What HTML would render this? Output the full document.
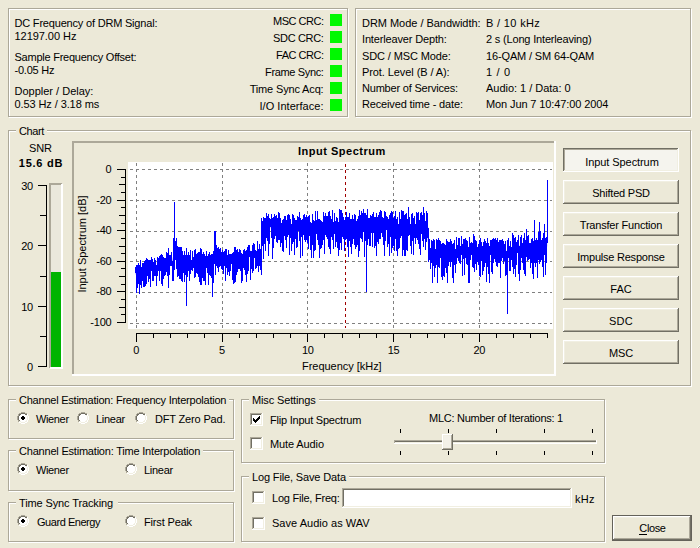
<!DOCTYPE html>
<html><head><meta charset="utf-8"><style>
html,body{margin:0;padding:0;}
body{width:700px;height:548px;background:#ECE9D8;position:relative;overflow:hidden;font-family:"Liberation Sans",sans-serif;}
.b{position:absolute;box-sizing:border-box;}
.t{position:absolute;font-size:11px;line-height:13px;white-space:nowrap;color:#000;letter-spacing:-0.2px;}
u{text-decoration:none;border-bottom:1px solid #000;line-height:11px;display:inline-block;}
</style></head><body>
<div class="b" style="left:9px;top:9px;width:340px;height:109px;border:1px solid #FFFFFF"></div>
<div class="b" style="left:8px;top:8px;width:340px;height:109px;border:1px solid #ACA899"></div>
<div class="t" style="left:14.5px;top:17px;letter-spacing:-0.192px;">DC Frequency of DRM Signal:</div>
<div class="t" style="left:14.5px;top:30px;letter-spacing:-0.050px;">12197.00 Hz</div>
<div class="t" style="left:14.5px;top:51px;letter-spacing:-0.239px;">Sample Frequency Offset:</div>
<div class="t" style="left:14.5px;top:64px;letter-spacing:-0.214px;">-0.05 Hz</div>
<div class="t" style="left:14.5px;top:85px;letter-spacing:0.000px;">Doppler / Delay:</div>
<div class="t" style="left:14.5px;top:98px;letter-spacing:-0.094px;">0.53 Hz / 3.18 ms</div>
<div class="t" style="right:376.5px;top:15px;letter-spacing:-0.500px;">MSC CRC:</div>
<div class="b" style="left:330px;top:14px;width:12px;height:12px;background:#00F800"></div>
<div class="t" style="right:376.5px;top:32px;letter-spacing:-0.343px;">SDC CRC:</div>
<div class="b" style="left:330px;top:31px;width:12px;height:12px;background:#00F800"></div>
<div class="t" style="right:376.5px;top:49px;letter-spacing:-0.486px;">FAC CRC:</div>
<div class="b" style="left:330px;top:48px;width:12px;height:12px;background:#00F800"></div>
<div class="t" style="right:376.5px;top:66px;letter-spacing:-0.360px;">Frame Sync:</div>
<div class="b" style="left:330px;top:65px;width:12px;height:12px;background:#00F800"></div>
<div class="t" style="right:376.5px;top:83px;letter-spacing:-0.154px;">Time Sync Acq:</div>
<div class="b" style="left:330px;top:82px;width:12px;height:12px;background:#00F800"></div>
<div class="t" style="right:376.5px;top:100px;letter-spacing:0.031px;">I/O Interface:</div>
<div class="b" style="left:330px;top:99px;width:12px;height:12px;background:#00F800"></div>
<div class="b" style="left:356px;top:9px;width:336px;height:109px;border:1px solid #FFFFFF"></div>
<div class="b" style="left:355px;top:8px;width:336px;height:109px;border:1px solid #ACA899"></div>
<div class="t" style="left:362px;top:17px;letter-spacing:-0.030px;">DRM Mode / Bandwidth:</div>
<div class="t" style="left:486px;top:17px;letter-spacing:0.333px;">B / 10 kHz</div>
<div class="t" style="left:362px;top:33px;letter-spacing:-0.153px;">Interleaver Depth:</div>
<div class="t" style="left:486px;top:33px;letter-spacing:-0.173px;">2 s (Long Interleaving)</div>
<div class="t" style="left:362px;top:50px;letter-spacing:-0.114px;">SDC / MSC Mode:</div>
<div class="t" style="left:486px;top:50px;letter-spacing:-0.141px;">16-QAM / SM 64-QAM</div>
<div class="t" style="left:362px;top:66px;letter-spacing:-0.084px;">Prot. Level (B / A):</div>
<div class="t" style="left:486px;top:66px;letter-spacing:0.650px;">1 / 0</div>
<div class="t" style="left:362px;top:82px;letter-spacing:-0.200px;">Number of Services:</div>
<div class="t" style="left:486px;top:82px;letter-spacing:-0.024px;">Audio: 1 / Data: 0</div>
<div class="t" style="left:362px;top:98px;letter-spacing:-0.150px;">Received time - date:</div>
<div class="t" style="left:486px;top:98px;letter-spacing:-0.109px;">Mon Jun 7 10:47:00 2004</div>
<div class="b" style="left:9px;top:131px;width:683px;height:256px;border:1px solid #FFFFFF"></div>
<div class="b" style="left:8px;top:130px;width:683px;height:256px;border:1px solid #ACA899"></div>
<div class="b" style="left:16px;top:124px;width:31px;height:12px;background:#ECE9D8"></div>
<div class="t" style="left:19px;top:125px;letter-spacing:-0.375px;">Chart</div>
<div class="t" style="left:-59.5px;width:200px;text-align:center;top:142px;letter-spacing:-0.100px;">SNR</div>
<div class="t" style="left:-59.0px;width:200px;text-align:center;top:157px;font-weight:bold;letter-spacing:0.733px;">15.6 dB</div>
<svg class="b" style="left:0;top:0" width="700" height="548" shape-rendering="crispEdges"><line x1="46.5" y1="185" x2="46.5" y2="367" stroke="#000" stroke-width="1"/><line x1="38" y1="185.5" x2="47" y2="185.5" stroke="#000"/><line x1="40" y1="215.5" x2="47" y2="215.5" stroke="#000"/><line x1="38" y1="245.5" x2="47" y2="245.5" stroke="#000"/><line x1="40" y1="276.5" x2="47" y2="276.5" stroke="#000"/><line x1="38" y1="306.5" x2="47" y2="306.5" stroke="#000"/><line x1="40" y1="336.5" x2="47" y2="336.5" stroke="#000"/><line x1="38" y1="366.5" x2="47" y2="366.5" stroke="#000"/><rect x="49" y="183" width="14" height="186" fill="#EAE8DC"/><rect x="49" y="183" width="13" height="2" fill="#ACA899"/><rect x="49" y="183" width="2" height="185" fill="#ACA899"/><rect x="61" y="184" width="2" height="185" fill="#FFFFFF"/><rect x="50" y="367" width="13" height="2" fill="#FFFFFF"/><rect x="51" y="272" width="10" height="95" fill="#00B400"/></svg>
<div class="t" style="right:667px;top:180px;">30</div>
<div class="t" style="right:667px;top:240px;">20</div>
<div class="t" style="right:667px;top:301px;">10</div>
<div class="t" style="right:667px;top:361px;">0</div>
<div class="b" style="left:72px;top:141px;width:484px;height:235px;background:#FFFFFF"></div>
<div class="b" style="left:72px;top:141px;width:482px;height:233px;background:#ACA899"></div>
<div class="b" style="left:74px;top:143px;width:480px;height:231px;background:#ECE9D8"></div>
<div class="t" style="left:298px;top:145px;font-weight:bold;letter-spacing:0.508px;">Input Spectrum</div>
<div class="b" style="left:128px;top:162px;width:425px;height:167px;background:#fff"></div>
<svg class="b" style="left:0;top:0" width="700" height="548"><g stroke="#808080" stroke-width="1" stroke-dasharray="3 3" shape-rendering="crispEdges"><line x1="130" y1="169.5" x2="552" y2="169.5"/><line x1="130" y1="200.5" x2="552" y2="200.5"/><line x1="130" y1="231.5" x2="552" y2="231.5"/><line x1="130" y1="261.5" x2="552" y2="261.5"/><line x1="130" y1="292.5" x2="552" y2="292.5"/><line x1="130" y1="323.5" x2="552" y2="323.5"/><line x1="136.5" y1="163" x2="136.5" y2="328"/><line x1="222.5" y1="163" x2="222.5" y2="328"/><line x1="307.5" y1="163" x2="307.5" y2="328"/><line x1="393.5" y1="163" x2="393.5" y2="328"/><line x1="479.5" y1="163" x2="479.5" y2="328"/></g><line x1="345.5" y1="164" x2="345.5" y2="328" stroke="#A00000" stroke-width="1" stroke-dasharray="3 3" shape-rendering="crispEdges"/><polygon fill="#0000FF" stroke="none" points="135.8,271.1 136.4,270.3 137.0,272.1 137.6,269.8 138.2,266.5 138.8,266.5 139.4,271.0 140.0,266.4 140.6,265.9 141.2,268.6 141.8,270.2 142.4,269.3 143.0,267.6 143.6,269.2 144.2,271.3 144.8,263.2 145.4,267.5 146.1,270.3 146.7,264.0 147.3,262.8 147.9,266.3 148.5,269.9 149.1,263.2 149.7,264.4 150.3,265.7 150.9,262.8 151.5,259.5 152.1,259.5 152.7,266.5 153.3,269.4 153.9,267.8 154.5,263.1 155.1,262.6 155.7,263.1 156.3,266.6 156.9,269.4 157.5,268.1 158.1,260.9 158.7,261.6 159.3,264.6 159.9,263.1 160.5,257.5 161.1,257.5 161.7,263.7 162.3,264.5 162.9,263.6 163.5,260.6 164.1,261.2 164.7,264.1 165.4,266.6 166.0,260.2 166.6,259.5 167.2,259.6 167.8,260.2 168.4,259.8 169.0,256.6 169.6,260.5 170.2,259.2 170.8,256.5 171.4,255.7 172.0,256.4 172.6,264.0 173.2,266.0 173.8,238.3 174.4,237.7 175.0,243.6 175.6,244.6 176.2,245.5 176.8,248.4 177.4,248.6 178.0,249.3 178.6,251.3 179.2,255.0 179.8,253.4 180.4,253.2 181.0,255.4 181.6,254.9 182.2,254.3 182.8,255.1 183.4,259.5 184.0,260.7 184.6,264.5 185.3,262.9 185.9,255.7 186.5,255.3 187.1,261.6 187.7,263.2 188.3,257.8 188.9,258.4 189.5,262.8 190.1,259.1 190.7,259.4 191.3,260.6 191.9,260.5 192.5,257.7 193.1,257.9 193.7,260.5 194.3,258.0 194.9,254.2 195.5,255.3 196.1,258.7 196.7,258.8 197.3,255.1 197.9,253.4 198.5,257.4 199.1,262.6 199.7,259.7 200.3,260.2 200.9,254.4 201.5,252.1 202.1,259.8 202.7,261.2 203.3,259.8 203.9,257.5 204.6,260.9 205.2,259.6 205.8,259.1 206.4,260.5 207.0,261.0 207.6,260.5 208.2,258.6 208.8,259.3 209.4,258.0 210.0,257.8 210.6,259.7 211.2,260.9 211.8,259.1 212.4,256.7 213.0,257.4 213.6,254.9 214.2,253.1 214.8,253.9 215.4,255.1 216.0,255.1 216.6,251.8 217.2,253.6 217.8,256.7 218.4,255.9 219.0,255.3 219.6,251.1 220.2,253.2 220.8,253.2 221.4,253.4 222.0,253.6 222.6,254.1 223.2,258.6 223.8,258.6 224.5,254.2 225.1,253.6 225.7,251.1 226.3,252.0 226.9,256.9 227.5,263.1 228.1,260.3 228.7,255.1 229.3,255.1 229.9,254.9 230.5,255.6 231.1,256.8 231.7,256.8 232.3,256.8 232.9,254.1 233.5,255.9 234.1,258.9 234.7,254.7 235.3,256.0 235.9,258.4 236.5,260.7 237.1,253.3 237.7,253.3 238.3,253.7 238.9,254.3 239.5,255.0 240.1,252.1 240.7,260.6 241.3,263.4 241.9,264.2 242.5,259.9 243.1,253.1 243.8,251.8 244.4,253.7 245.0,255.8 245.6,257.1 246.2,257.3 246.8,253.3 247.4,253.3 248.0,252.9 248.6,250.4 249.2,249.3 249.8,249.3 250.4,251.7 251.0,255.5 251.6,252.6 252.2,250.3 252.8,250.2 253.4,249.6 254.0,246.4 254.6,246.6 255.2,252.4 255.8,255.0 256.4,252.3 257.0,251.2 257.6,247.4 258.2,250.0 258.8,251.4 259.4,247.6 260.0,247.9 260.6,252.7 261.2,252.6 261.8,229.8 262.4,225.9 263.0,226.0 263.7,221.8 264.3,221.5 264.9,221.5 265.5,221.4 266.1,221.4 266.7,224.3 267.3,222.8 267.9,222.8 268.5,223.1 269.1,223.8 269.7,225.9 270.3,223.0 270.9,219.6 271.5,219.1 272.1,224.7 272.7,222.9 273.3,222.2 273.9,222.5 274.5,218.6 275.1,222.0 275.7,220.7 276.3,218.0 276.9,220.0 277.5,225.3 278.1,219.0 278.7,214.3 279.3,215.5 279.9,218.7 280.5,226.8 281.1,228.2 281.7,227.6 282.3,224.1 283.0,225.7 283.6,225.9 284.2,226.0 284.8,226.5 285.4,222.6 286.0,224.3 286.6,226.0 287.2,223.9 287.8,223.0 288.4,223.0 289.0,224.0 289.6,225.5 290.2,221.7 290.8,222.6 291.4,226.6 292.0,228.1 292.6,224.4 293.2,220.5 293.8,224.8 294.4,224.8 295.0,224.6 295.6,223.4 296.2,223.1 296.8,226.6 297.4,227.6 298.0,223.1 298.6,221.7 299.2,220.1 299.8,225.9 300.4,227.0 301.0,222.5 301.6,221.5 302.2,222.6 302.9,225.0 303.5,224.0 304.1,221.1 304.7,220.7 305.3,220.2 305.9,222.5 306.5,220.6 307.1,220.1 307.7,225.8 308.3,227.2 308.9,225.9 309.5,219.2 310.1,225.1 310.7,231.6 311.3,226.5 311.9,225.7 312.5,223.0 313.1,220.6 313.7,221.9 314.3,226.3 314.9,228.8 315.5,224.0 316.1,220.2 316.7,221.2 317.3,221.0 317.9,218.5 318.5,225.7 319.1,221.8 319.7,222.3 320.3,226.3 320.9,222.7 321.5,224.5 322.2,228.9 322.8,227.0 323.4,223.1 324.0,220.9 324.6,220.9 325.2,217.8 325.8,217.6 326.4,225.7 327.0,225.9 327.6,220.8 328.2,217.7 328.8,218.3 329.4,218.2 330.0,218.2 330.6,221.2 331.2,222.2 331.8,222.7 332.4,219.9 333.0,222.7 333.6,226.0 334.2,225.8 334.8,225.6 335.4,224.9 336.0,223.7 336.6,221.2 337.2,222.3 337.8,223.7 338.4,223.6 339.0,232.4 339.6,220.3 340.2,213.9 340.8,222.7 341.4,220.8 342.1,220.9 342.7,224.4 343.3,224.0 343.9,224.3 344.5,225.2 345.1,220.4 345.7,223.1 346.3,227.6 346.9,225.4 347.5,221.7 348.1,220.2 348.7,219.2 349.3,220.0 349.9,221.1 350.5,223.3 351.1,221.9 351.7,222.6 352.3,226.5 352.9,226.1 353.5,226.3 354.1,220.5 354.7,220.2 355.3,218.8 355.9,221.3 356.5,225.3 357.1,222.8 357.7,222.1 358.3,223.6 358.9,217.9 359.5,227.5 360.1,227.0 360.7,222.5 361.4,221.5 362.0,219.7 362.6,226.4 363.2,224.8 363.8,215.3 364.4,219.4 365.0,219.3 365.6,220.5 366.2,220.9 366.8,216.4 367.4,213.1 368.0,219.6 368.6,222.2 369.2,223.0 369.8,229.1 370.4,222.7 371.0,220.7 371.6,217.7 372.2,216.9 372.8,219.7 373.4,219.7 374.0,219.0 374.6,225.2 375.2,229.7 375.8,220.7 376.4,220.8 377.0,228.2 377.6,221.9 378.2,217.1 378.8,218.6 379.4,218.1 380.0,218.1 380.6,217.1 381.3,217.2 381.9,217.0 382.5,218.5 383.1,223.5 383.7,221.3 384.3,218.5 384.9,221.2 385.5,216.3 386.1,216.6 386.7,220.0 387.3,221.1 387.9,225.7 388.5,225.7 389.1,222.5 389.7,222.5 390.3,216.8 390.9,215.9 391.5,216.5 392.1,217.2 392.7,220.2 393.3,222.5 393.9,227.1 394.5,223.4 395.1,216.7 395.7,217.7 396.3,220.4 396.9,220.7 397.5,221.8 398.1,225.5 398.7,231.0 399.3,219.9 399.9,218.3 400.6,222.3 401.2,219.7 401.8,213.1 402.4,214.1 403.0,218.3 403.6,220.8 404.2,221.0 404.8,222.4 405.4,219.4 406.0,219.1 406.6,219.7 407.2,223.4 407.8,223.6 408.4,220.0 409.0,221.2 409.6,223.9 410.2,225.1 410.8,228.8 411.4,222.8 412.0,221.4 412.6,217.0 413.2,218.9 413.8,222.3 414.4,219.8 415.0,224.9 415.6,227.7 416.2,221.8 416.8,219.5 417.4,217.8 418.0,221.7 418.6,220.2 419.2,220.4 419.8,223.7 420.5,222.6 421.1,214.7 421.7,214.3 422.3,219.0 422.9,220.9 423.5,220.1 424.1,217.0 424.7,223.4 425.3,228.7 425.9,227.1 426.5,218.1 427.1,217.5 427.7,223.2 428.3,229.7 428.9,248.5 429.5,245.9 430.1,249.2 430.7,252.5 431.3,252.5 431.9,245.8 432.5,252.7 433.1,248.4 433.7,243.8 434.3,243.3 434.9,250.0 435.5,254.7 436.1,252.5 436.7,241.0 437.3,242.7 437.9,252.4 438.5,249.2 439.1,246.6 439.8,249.9 440.4,246.7 441.0,245.6 441.6,248.4 442.2,248.4 442.8,246.0 443.4,245.7 444.0,246.2 444.6,247.0 445.2,248.6 445.8,252.9 446.4,252.9 447.0,245.8 447.6,247.2 448.2,247.6 448.8,245.6 449.4,247.0 450.0,243.8 450.6,243.5 451.2,246.8 451.8,248.2 452.4,251.2 453.0,249.8 453.6,249.8 454.2,245.7 454.8,249.8 455.4,253.8 456.0,252.7 456.6,244.5 457.2,245.4 457.8,248.1 458.4,248.3 459.0,248.3 459.7,248.3 460.3,247.4 460.9,249.8 461.5,246.5 462.1,244.9 462.7,245.0 463.3,241.2 463.9,244.7 464.5,250.7 465.1,240.5 465.7,246.7 466.3,245.1 466.9,244.7 467.5,247.5 468.1,248.0 468.7,254.9 469.3,252.5 469.9,248.8 470.5,249.9 471.1,250.4 471.7,247.8 472.3,247.3 472.9,245.7 473.5,242.6 474.1,243.1 474.7,243.1 475.3,242.7 475.9,243.1 476.5,247.6 477.1,251.9 477.7,252.1 478.3,250.3 479.0,247.6 479.6,250.4 480.2,250.7 480.8,251.6 481.4,253.5 482.0,250.5 482.6,247.8 483.2,246.3 483.8,245.7 484.4,245.8 485.0,244.6 485.6,248.5 486.2,248.1 486.8,245.5 487.4,244.5 488.0,247.4 488.6,249.6 489.2,249.3 489.8,247.7 490.4,247.2 491.0,248.7 491.6,249.0 492.2,246.3 492.8,248.1 493.4,246.0 494.0,244.3 494.6,245.0 495.2,242.9 495.8,246.0 496.4,248.8 497.0,249.0 497.6,244.5 498.2,248.6 498.9,243.2 499.5,243.1 500.1,248.1 500.7,248.0 501.3,245.5 501.9,246.2 502.5,245.8 503.1,243.7 503.7,245.0 504.3,247.6 504.9,247.4 505.5,248.7 506.1,252.5 506.7,254.0 507.3,244.8 507.9,242.6 508.5,242.3 509.1,246.4 509.7,248.1 510.3,247.6 510.9,249.9 511.5,249.6 512.1,246.7 512.7,245.2 513.3,250.8 513.9,244.7 514.5,247.4 515.1,249.5 515.7,248.3 516.3,247.4 516.9,244.8 517.5,244.1 518.2,244.1 518.8,243.8 519.4,246.5 520.0,246.0 520.6,245.3 521.2,243.3 521.8,241.6 522.4,244.2 523.0,244.9 523.6,241.8 524.2,240.9 524.8,243.7 525.4,243.7 526.0,245.4 526.6,244.6 527.2,241.6 527.8,241.4 528.4,240.3 529.0,242.8 529.6,245.6 530.2,249.6 530.8,249.8 531.4,246.7 532.0,244.9 532.6,243.0 533.2,245.3 533.8,247.5 534.4,240.6 535.0,242.7 535.6,242.7 536.2,240.7 536.8,244.8 537.4,243.3 538.1,243.1 538.7,239.4 539.3,240.5 539.9,252.6 540.5,241.1 541.1,241.1 541.7,243.8 542.3,243.5 542.9,244.4 543.5,244.2 544.1,244.5 544.7,243.6 545.3,248.5 545.9,247.0 546.5,244.0 547.1,238.0 547.1,246.3 546.5,249.7 545.9,254.3 545.3,254.3 544.7,248.7 544.1,249.1 543.5,248.4 542.9,249.1 542.3,249.5 541.7,246.4 541.1,246.2 540.5,256.5 539.9,257.5 539.3,253.7 538.7,251.8 538.1,252.6 537.4,250.2 536.8,250.2 536.2,249.8 535.6,253.6 535.0,254.1 534.4,260.8 533.8,259.1 533.2,255.2 532.6,252.0 532.0,253.6 531.4,259.7 530.8,261.6 530.2,258.0 529.6,251.9 529.0,250.9 528.4,248.1 527.8,248.1 527.2,249.0 526.6,251.5 526.0,254.1 525.4,250.5 524.8,259.7 524.2,259.5 523.6,248.9 523.0,252.3 522.4,252.4 521.8,251.8 521.2,251.6 520.6,251.8 520.0,253.3 519.4,254.4 518.8,253.2 518.2,248.1 517.5,247.0 516.9,251.7 516.3,258.9 515.7,259.4 515.1,264.4 514.5,255.9 513.9,255.7 513.3,260.4 512.7,261.0 512.1,253.6 511.5,255.3 510.9,253.9 510.3,254.4 509.7,259.6 509.1,254.0 508.5,253.9 507.9,247.4 507.3,257.6 506.7,267.8 506.1,265.2 505.5,255.1 504.9,251.8 504.3,252.0 503.7,251.4 503.1,246.7 502.5,254.4 501.9,254.9 501.3,254.5 500.7,254.1 500.1,254.3 499.5,252.4 498.9,256.7 498.2,255.1 497.6,256.6 497.0,261.3 496.4,262.3 495.8,256.0 495.2,257.6 494.6,256.4 494.0,252.7 493.4,254.0 492.8,262.2 492.2,262.3 491.6,262.2 491.0,254.4 490.4,253.9 489.8,253.0 489.2,252.5 488.6,257.5 488.0,261.3 487.4,261.3 486.8,256.6 486.2,258.3 485.6,256.5 485.0,255.4 484.4,255.5 483.8,260.3 483.2,260.3 482.6,256.1 482.0,255.7 481.4,260.3 480.8,261.1 480.2,255.8 479.6,261.2 479.0,258.0 478.3,258.9 477.7,256.7 477.1,255.8 476.5,254.2 475.9,250.5 475.3,252.2 474.7,253.2 474.1,250.4 473.5,255.5 472.9,259.2 472.3,254.6 471.7,254.0 471.1,254.1 470.5,256.4 469.9,257.0 469.3,268.5 468.7,272.3 468.1,261.6 467.5,255.9 466.9,251.9 466.3,254.5 465.7,255.0 465.1,253.0 464.5,254.4 463.9,253.0 463.3,245.4 462.7,258.3 462.1,255.2 461.5,252.4 460.9,253.1 460.3,254.0 459.7,250.2 459.0,252.8 458.4,253.7 457.8,253.1 457.2,247.8 456.6,250.3 456.0,262.7 455.4,265.3 454.8,254.8 454.2,261.1 453.6,254.9 453.0,254.2 452.4,259.5 451.8,254.7 451.2,252.1 450.6,251.4 450.0,251.4 449.4,253.7 448.8,253.8 448.2,253.8 447.6,253.7 447.0,258.6 446.4,260.4 445.8,261.3 445.2,257.3 444.6,260.2 444.0,260.3 443.4,254.3 442.8,257.2 442.2,263.1 441.6,255.9 441.0,255.2 440.4,251.8 439.8,260.6 439.1,260.6 438.5,260.8 437.9,264.4 437.3,252.1 436.7,252.1 436.1,264.0 435.5,264.0 434.9,259.6 434.3,250.4 433.7,246.3 433.1,261.6 432.5,261.6 431.9,256.3 431.3,257.5 430.7,256.5 430.1,254.5 429.5,253.9 428.9,259.3 428.3,256.1 427.7,233.8 427.1,225.2 426.5,225.3 425.9,232.7 425.3,233.0 424.7,231.8 424.1,228.3 423.5,227.4 422.9,231.8 422.3,226.9 421.7,225.1 421.1,222.8 420.5,230.2 419.8,235.3 419.2,223.5 418.6,227.8 418.0,228.7 417.4,224.5 416.8,223.4 416.2,228.9 415.6,235.4 415.0,233.6 414.4,225.5 413.8,231.0 413.2,229.2 412.6,224.6 412.0,225.4 411.4,238.3 410.8,238.3 410.2,231.2 409.6,226.9 409.0,229.2 408.4,229.6 407.8,228.3 407.2,227.9 406.6,232.4 406.0,229.6 405.4,229.6 404.8,236.0 404.2,230.8 403.6,232.0 403.0,235.3 402.4,228.0 401.8,222.9 401.2,225.2 400.6,234.7 399.9,228.1 399.3,236.4 398.7,240.7 398.1,237.1 397.5,232.0 396.9,229.9 396.3,226.3 395.7,220.5 395.1,222.6 394.5,233.7 393.9,240.7 393.3,231.1 392.7,228.5 392.1,235.0 391.5,227.3 390.9,225.2 390.3,229.5 389.7,229.4 389.1,231.3 388.5,231.8 387.9,232.8 387.3,229.4 386.7,223.2 386.1,220.7 385.5,225.2 384.9,232.5 384.3,222.4 383.7,224.2 383.1,229.6 382.5,226.8 381.9,223.0 381.3,225.7 380.6,227.0 380.0,228.1 379.4,227.1 378.8,226.8 378.2,226.9 377.6,238.3 377.0,238.3 376.4,236.7 375.8,235.0 375.2,240.7 374.6,235.3 374.0,223.3 373.4,221.7 372.8,222.4 372.2,225.6 371.6,225.4 371.0,225.4 370.4,238.1 369.8,241.6 369.2,238.7 368.6,227.8 368.0,226.8 367.4,223.4 366.8,224.2 366.2,224.7 365.6,224.2 365.0,238.2 364.4,231.5 363.8,226.6 363.2,230.5 362.6,230.5 362.0,225.7 361.4,230.5 360.7,230.9 360.1,232.6 359.5,232.9 358.9,230.5 358.3,235.5 357.7,233.7 357.1,229.4 356.5,231.0 355.9,231.4 355.3,228.6 354.7,224.5 354.1,228.2 353.5,230.5 352.9,229.4 352.3,228.9 351.7,228.5 351.1,227.3 350.5,237.3 349.9,237.5 349.3,228.2 348.7,228.2 348.1,237.2 347.5,235.3 346.9,231.1 346.3,232.6 345.7,227.9 345.1,225.8 344.5,232.8 343.9,228.8 343.3,226.9 342.7,228.4 342.1,227.3 341.4,226.8 340.8,227.5 340.2,228.2 339.6,242.0 339.0,242.0 338.4,229.9 337.8,227.4 337.2,227.0 336.6,231.4 336.0,232.2 335.4,232.0 334.8,232.4 334.2,232.6 333.6,232.9 333.0,232.5 332.4,226.7 331.8,227.2 331.2,225.6 330.6,229.5 330.0,231.8 329.4,223.1 328.8,225.3 328.2,225.3 327.6,232.7 327.0,233.2 326.4,230.6 325.8,226.7 325.2,223.8 324.6,228.5 324.0,228.5 323.4,234.6 322.8,233.6 322.2,236.5 321.5,233.1 320.9,227.8 320.3,235.6 319.7,231.1 319.1,228.9 318.5,233.5 317.9,232.8 317.3,229.3 316.7,225.3 316.1,224.7 315.5,232.0 314.9,241.4 314.3,240.0 313.7,230.2 313.1,229.5 312.5,241.3 311.9,241.7 311.3,237.3 310.7,238.2 310.1,233.9 309.5,228.2 308.9,237.6 308.3,238.8 307.7,233.1 307.1,228.6 306.5,228.3 305.9,234.1 305.3,226.9 304.7,226.0 304.1,226.3 303.5,230.6 302.9,234.2 302.2,230.9 301.6,223.3 301.0,227.9 300.4,232.5 299.8,230.3 299.2,228.2 298.6,229.5 298.0,230.2 297.4,231.7 296.8,231.7 296.2,226.1 295.6,234.8 295.0,235.8 294.4,234.5 293.8,234.1 293.2,227.8 292.6,234.1 292.0,236.7 291.4,232.9 290.8,225.7 290.2,229.1 289.6,235.6 289.0,231.3 288.4,231.3 287.8,231.9 287.2,233.0 286.6,234.3 286.0,231.5 285.4,230.3 284.8,231.5 284.2,229.8 283.6,237.5 283.0,239.4 282.3,233.1 281.7,233.0 281.1,236.5 280.5,237.8 279.9,232.4 279.3,220.5 278.7,221.6 278.1,228.2 277.5,232.7 276.9,232.7 276.3,231.1 275.7,227.6 275.1,227.4 274.5,228.3 273.9,229.2 273.3,230.4 272.7,232.9 272.1,234.3 271.5,224.2 270.9,224.4 270.3,227.0 269.7,231.1 269.1,231.9 268.5,232.6 267.9,227.2 267.3,228.7 266.7,233.5 266.1,232.2 265.5,235.2 264.9,229.9 264.3,229.9 263.7,232.0 263.0,229.7 262.4,234.5 261.8,250.1 261.2,258.2 260.6,263.4 260.0,254.7 259.4,254.0 258.8,258.6 258.2,265.2 257.6,260.7 257.0,256.7 256.4,258.7 255.8,260.0 255.2,257.0 254.6,252.7 254.0,251.4 253.4,259.5 252.8,257.4 252.2,256.1 251.6,262.0 251.0,266.4 250.4,264.6 249.8,251.8 249.2,257.2 248.6,256.8 248.0,258.5 247.4,260.4 246.8,264.3 246.2,264.9 245.6,262.5 245.0,265.2 244.4,264.7 243.8,256.8 243.1,258.2 242.5,268.2 241.9,271.6 241.3,269.3 240.7,263.7 240.1,260.5 239.5,258.9 238.9,258.9 238.3,259.9 237.7,258.8 237.1,261.7 236.5,265.3 235.9,268.8 235.3,266.2 234.7,265.5 234.1,267.9 233.5,260.4 232.9,260.4 232.3,262.3 231.7,262.6 231.1,262.3 230.5,261.5 229.9,265.6 229.3,264.5 228.7,260.8 228.1,268.4 227.5,268.4 226.9,263.4 226.3,258.2 225.7,257.6 225.1,258.3 224.5,262.6 223.8,265.1 223.2,270.4 222.6,261.0 222.0,258.0 221.4,258.2 220.8,259.4 220.2,258.2 219.6,257.1 219.0,263.1 218.4,264.5 217.8,261.8 217.2,260.5 216.6,256.9 216.0,261.7 215.4,259.6 214.8,258.8 214.2,261.2 213.6,265.9 213.0,265.7 212.4,265.1 211.8,266.8 211.2,263.9 210.6,263.8 210.0,263.2 209.4,263.2 208.8,264.1 208.2,264.9 207.6,266.2 207.0,263.9 206.4,263.9 205.8,262.6 205.2,263.3 204.6,269.1 203.9,267.5 203.3,265.5 202.7,266.1 202.1,267.4 201.5,262.4 200.9,261.8 200.3,264.1 199.7,268.6 199.1,270.9 198.5,270.4 197.9,257.4 197.3,260.3 196.7,265.0 196.1,263.6 195.5,261.8 194.9,259.4 194.3,262.4 193.7,263.8 193.1,262.6 192.5,262.0 191.9,265.0 191.3,265.7 190.7,266.1 190.1,262.9 189.5,267.2 188.9,266.0 188.3,263.7 187.7,271.2 187.1,276.0 186.5,266.6 185.9,260.3 185.3,267.8 184.6,268.9 184.0,269.1 183.4,269.2 182.8,263.7 182.2,259.5 181.6,258.5 181.0,260.5 180.4,260.5 179.8,260.7 179.2,260.6 178.6,254.9 178.0,258.2 177.4,259.6 176.8,251.5 176.2,248.7 175.6,248.6 175.0,253.9 174.4,244.0 173.8,260.4 173.2,272.5 172.6,274.0 172.0,265.0 171.4,260.5 170.8,260.5 170.2,264.8 169.6,265.3 169.0,264.4 168.4,268.1 167.8,267.6 167.2,263.7 166.6,264.3 166.0,269.1 165.4,270.1 164.7,271.9 164.1,269.0 163.5,268.6 162.9,268.8 162.3,268.9 161.7,268.4 161.1,264.1 160.5,263.5 159.9,274.4 159.3,274.4 158.7,267.2 158.1,268.0 157.5,274.1 156.9,275.5 156.3,275.0 155.7,268.5 155.1,267.0 154.5,268.8 153.9,275.3 153.3,275.5 152.7,273.1 152.1,269.6 151.5,262.6 150.9,268.7 150.3,269.0 149.7,266.1 149.1,273.0 148.5,275.6 147.9,271.4 147.3,266.2 146.7,270.6 146.1,281.0 145.4,273.9 144.8,270.8 144.2,276.4 143.6,275.8 143.0,272.8 142.4,277.5 141.8,277.4 141.2,276.0 140.6,269.9 140.0,273.3 139.4,274.8 138.8,273.2 138.2,270.8 137.6,275.8 137.0,279.5 136.4,275.8 135.8,274.2"/><polyline fill="none" stroke="#0000FF" stroke-width="1" shape-rendering="crispEdges" points="135.80,273.4 135.90,267.3 136.00,269.2 136.10,275.0 136.20,272.9 136.30,286.2 136.40,273.4 136.50,280.8 136.60,293.0 136.70,266.4 136.81,267.5 136.91,276.1 137.01,265.2 137.11,271.5 137.21,286.5 137.31,276.4 137.41,274.4 137.51,287.5 137.61,269.1 137.71,266.7 137.81,272.1 137.91,267.0 138.01,283.4 138.11,271.6 138.21,263.0 138.31,266.5 138.41,268.9 138.51,266.0 138.61,266.1 138.71,283.5 138.82,273.1 138.92,273.2 139.02,266.6 139.12,270.7 139.22,275.1 139.32,282.1 139.42,274.0 139.52,269.9 139.62,294.4 139.72,271.7 139.82,277.4 139.92,270.6 140.02,264.0 140.12,269.4 140.22,265.1 140.32,260.0 140.42,264.8 140.52,276.2 140.62,285.4 140.73,270.1 140.83,267.9 140.93,267.9 141.03,267.9 141.13,272.8 141.23,274.6 141.33,277.8 141.43,287.9 141.53,276.6 141.63,266.6 141.73,272.8 141.83,285.7 141.93,278.0 142.03,272.5 142.13,263.8 142.23,269.2 142.33,268.9 142.43,263.2 142.53,280.9 142.63,276.3 142.74,280.0 142.84,269.6 142.94,271.9 143.04,265.9 143.14,268.7 143.24,263.4 143.34,267.1 143.44,273.3 143.54,270.4 143.64,276.6 143.74,287.2 143.84,271.8 143.94,275.3 144.04,276.0 144.14,278.7 144.24,272.3 144.34,271.0 144.44,266.3 144.54,269.5 144.65,286.5 144.75,261.9 144.85,261.9 144.95,260.8 145.05,272.7 145.15,270.1 145.25,259.6 145.35,270.3 145.45,282.1 145.55,274.5 145.65,276.8 145.75,266.5 145.85,269.8 145.95,285.5 146.05,281.5 146.15,283.6 146.25,271.4 146.35,266.2 146.45,279.8 146.55,268.0 146.66,264.1 146.76,258.2 146.86,268.8 146.96,263.9 147.06,260.9 147.16,264.0 147.26,272.3 147.36,267.1 147.46,262.8 147.56,258.8 147.66,269.9 147.76,262.8 147.86,276.4 147.96,265.9 148.06,270.4 148.16,281.6 148.26,271.8 148.36,269.7 148.46,273.3 148.57,275.6 148.67,277.9 148.77,275.4 148.87,260.2 148.97,261.2 149.07,272.1 149.17,266.0 149.27,259.6 149.37,265.9 149.47,264.2 149.57,262.8 149.67,265.5 149.77,278.9 149.87,262.3 149.97,269.1 150.07,264.8 150.17,266.2 150.27,268.7 150.37,286.7 150.47,266.1 150.58,268.3 150.68,262.6 150.78,275.1 150.88,268.6 150.98,259.9 151.08,259.6 151.18,263.5 151.28,271.1 151.38,259.2 151.48,259.5 151.58,257.3 151.68,259.7 151.78,260.6 151.88,258.9 151.98,268.4 152.08,270.1 152.18,273.6 152.28,278.8 152.38,263.5 152.49,258.9 152.59,270.2 152.69,273.6 152.79,280.6 152.89,268.4 152.99,262.8 153.09,265.7 153.19,271.8 153.29,275.8 153.39,272.7 153.49,280.7 153.59,277.6 153.69,274.9 153.79,267.0 153.89,261.7 153.99,265.6 154.09,266.1 154.19,272.3 154.29,275.5 154.39,269.7 154.50,269.8 154.60,262.5 154.70,258.4 154.80,259.3 154.90,264.6 155.00,266.9 155.10,261.0 155.20,262.9 155.30,263.5 155.40,267.0 155.50,269.0 155.60,273.0 155.70,276.3 155.80,265.1 155.90,259.8 156.00,262.4 156.10,281.1 156.20,267.1 156.30,268.3 156.41,271.9 156.51,266.4 156.61,268.4 156.71,280.7 156.81,280.0 156.91,285.5 157.01,273.9 157.11,274.1 157.21,271.6 157.31,268.1 157.41,276.0 157.51,257.6 157.61,257.2 157.71,264.5 157.81,276.0 157.91,268.1 158.01,268.1 158.11,271.2 158.21,259.8 158.31,267.8 158.42,267.5 158.52,263.3 158.62,259.0 158.72,258.0 158.82,266.3 158.92,266.3 159.02,260.8 159.12,263.9 159.22,268.3 159.32,270.8 159.42,261.4 159.52,279.9 159.62,280.6 159.72,276.0 159.82,277.6 159.92,256.4 160.02,261.8 160.12,261.5 160.22,270.4 160.33,270.9 160.43,266.3 160.53,264.3 160.63,261.2 160.73,258.4 160.83,257.0 160.93,257.1 161.03,254.1 161.13,262.5 161.23,282.5 161.33,264.0 161.43,256.8 161.53,264.2 161.63,283.5 161.73,263.6 161.83,258.9 161.93,267.1 162.03,266.5 162.13,269.0 162.23,277.9 162.34,268.8 162.44,284.7 162.54,267.5 162.64,255.4 162.74,263.6 162.84,271.0 162.94,286.3 163.04,268.3 163.14,257.3 163.24,260.3 163.34,268.7 163.44,263.5 163.54,279.2 163.64,270.3 163.74,260.7 163.84,260.5 163.94,262.3 164.04,258.0 164.14,261.5 164.25,274.2 164.35,266.2 164.45,276.1 164.55,261.3 164.65,261.2 164.75,265.9 164.85,272.6 164.95,270.2 165.05,263.4 165.15,274.8 165.25,269.8 165.35,269.5 165.45,269.6 165.55,270.2 165.65,258.3 165.75,268.4 165.85,261.4 165.95,259.7 166.05,264.8 166.15,259.1 166.26,252.3 166.36,271.6 166.46,262.8 166.56,263.0 166.66,259.4 166.76,257.2 166.86,261.4 166.96,272.3 167.06,267.1 167.16,261.2 167.26,259.9 167.36,259.4 167.46,253.3 167.56,276.2 167.66,264.0 167.76,268.0 167.86,266.5 167.96,259.4 168.06,270.8 168.17,272.2 168.27,260.8 168.37,248.5 168.47,253.9 168.57,256.8 168.67,261.8 168.77,268.2 168.87,287.9 168.97,268.0 169.07,255.1 169.17,256.4 169.27,263.8 169.37,264.6 169.47,257.1 169.57,263.9 169.67,259.1 169.77,266.3 169.87,274.9 169.97,264.3 170.07,265.5 170.18,261.1 170.28,265.0 170.38,259.5 170.48,256.2 170.58,255.1 170.68,258.5 170.78,254.9 170.88,260.6 170.98,257.1 171.08,260.5 171.18,261.5 171.28,255.5 171.38,265.8 171.48,266.1 171.58,255.2 171.68,252.3 171.78,256.2 171.88,256.7 171.98,254.7 172.09,281.3 172.19,261.1 172.29,263.5 172.39,265.4 172.49,263.9 172.59,264.3 172.69,281.0 172.79,269.4 172.89,274.2 172.99,273.6 173.09,281.1 173.19,266.7 173.29,265.6 173.39,267.4 173.49,269.9 173.59,239.7 173.69,248.3 173.79,237.7 173.89,247.2 173.99,240.3 174.10,237.3 174.20,237.6 174.30,237.2 174.40,202.1 174.50,253.9 174.60,269.6 174.70,243.9 174.80,242.2 174.90,244.0 175.00,240.4 175.10,243.4 175.20,245.0 175.30,256.9 175.40,259.9 175.50,253.7 175.60,246.1 175.70,245.3 175.80,248.8 175.90,244.4 176.01,248.2 176.11,244.5 176.21,237.8 176.31,269.3 176.41,248.6 176.51,252.0 176.61,247.7 176.71,249.4 176.81,250.3 176.91,268.8 177.01,249.4 177.11,246.2 177.21,248.2 177.31,255.5 177.41,276.9 177.51,261.3 177.61,267.2 177.71,248.1 177.81,254.4 177.91,247.3 178.02,246.7 178.12,248.2 178.22,259.8 178.32,252.0 178.42,251.7 178.52,254.0 178.62,255.2 178.72,253.0 178.82,249.4 178.92,251.0 179.02,279.3 179.12,259.8 179.22,272.3 179.32,260.7 179.42,260.3 179.52,255.0 179.62,258.3 179.72,263.9 179.82,252.8 179.93,247.4 180.03,246.7 180.13,260.8 180.23,266.6 180.33,251.8 180.43,256.4 180.53,270.2 180.63,254.5 180.73,254.3 180.83,260.4 180.93,260.5 181.03,281.2 181.13,264.6 181.23,256.1 181.33,255.2 181.43,246.9 181.53,256.5 181.63,254.1 181.73,257.8 181.83,254.8 181.94,258.8 182.04,281.9 182.14,251.6 182.24,254.7 182.34,268.1 182.44,259.8 182.54,251.1 182.64,275.1 182.74,250.6 182.84,255.5 182.94,265.1 183.04,272.7 183.14,260.3 183.24,260.3 183.34,254.9 183.44,259.2 183.54,271.9 183.64,269.3 183.74,258.0 183.85,271.8 183.95,268.8 184.05,265.4 184.15,269.2 184.25,265.0 184.35,250.8 184.45,251.8 184.55,264.3 184.65,262.8 184.75,268.2 184.85,275.9 184.95,282.2 185.05,270.5 185.15,265.1 185.25,259.3 185.35,255.0 185.45,266.8 185.55,258.1 185.65,263.2 185.75,263.6 185.86,256.3 185.96,255.5 186.06,260.3 186.16,255.1 186.26,248.4 186.36,260.3 186.46,269.3 186.56,283.6 186.66,275.1 186.76,255.2 186.86,251.4 186.96,306.1 187.06,254.6 187.16,276.4 187.26,260.2 187.36,264.8 187.46,271.0 187.56,276.4 187.66,276.2 187.77,264.1 187.87,265.2 187.97,262.8 188.07,258.5 188.17,271.3 188.27,252.3 188.37,253.7 188.47,262.0 188.57,257.6 188.67,253.9 188.77,260.4 188.87,267.4 188.97,266.3 189.07,267.6 189.17,280.6 189.27,265.4 189.37,260.4 189.47,255.2 189.57,263.0 189.67,268.8 189.78,266.7 189.88,258.1 189.98,262.7 190.08,262.2 190.18,261.7 190.28,250.6 190.38,250.5 190.48,268.3 190.58,261.3 190.68,255.7 190.78,258.6 190.88,274.0 190.98,272.5 191.08,266.0 191.18,266.1 191.28,265.0 191.38,260.5 191.48,265.0 191.58,264.2 191.69,260.6 191.79,260.6 191.89,267.3 191.99,266.6 192.09,259.4 192.19,253.8 192.29,258.3 192.39,271.4 192.49,259.8 192.59,254.0 192.69,251.3 192.79,257.4 192.89,261.5 192.99,262.3 193.09,268.1 193.19,257.2 193.29,263.8 193.39,259.0 193.49,266.4 193.59,262.7 193.70,263.0 193.80,263.8 193.90,260.0 194.00,257.4 194.10,261.8 194.20,278.0 194.30,259.2 194.40,262.7 194.50,257.4 194.60,260.2 194.70,254.3 194.80,250.5 194.90,254.2 195.00,259.5 195.10,259.0 195.20,251.3 195.30,248.9 195.40,277.3 195.50,253.4 195.61,262.6 195.71,265.4 195.81,258.0 195.91,261.4 196.01,262.0 196.11,257.0 196.21,264.0 196.31,265.4 196.41,260.3 196.51,264.1 196.61,256.7 196.71,254.2 196.81,272.6 196.91,258.8 197.01,268.7 197.11,265.8 197.21,258.8 197.31,257.6 197.41,253.6 197.51,252.6 197.62,253.3 197.72,260.9 197.82,257.1 197.92,253.6 198.02,276.9 198.12,253.4 198.22,251.8 198.32,261.9 198.42,255.4 198.52,266.9 198.62,267.8 198.72,273.2 198.82,269.3 198.92,270.9 199.02,270.8 199.12,258.1 199.22,254.8 199.32,260.7 199.42,259.6 199.53,272.7 199.63,274.2 199.73,259.9 199.83,252.3 199.93,266.9 200.03,284.5 200.13,264.3 200.23,269.4 200.33,260.8 200.43,254.3 200.53,262.2 200.63,263.5 200.73,263.0 200.83,254.5 200.93,248.1 201.03,252.0 201.13,263.1 201.23,252.3 201.33,254.6 201.43,260.9 201.54,267.6 201.64,248.6 201.74,249.3 201.84,271.7 201.94,284.5 202.04,259.6 202.14,277.8 202.24,266.9 202.34,261.0 202.44,255.3 202.54,262.7 202.64,260.2 202.74,262.0 202.84,275.7 202.94,264.2 203.04,252.4 203.14,261.8 203.24,281.1 203.34,268.0 203.45,261.5 203.55,266.1 203.65,254.9 203.75,253.9 203.85,259.1 203.95,281.1 204.05,269.9 204.15,260.4 204.25,280.6 204.35,256.5 204.45,256.8 204.55,254.4 204.65,263.0 204.75,261.9 204.85,266.5 204.95,267.2 205.05,284.5 205.15,258.6 205.25,263.4 205.35,262.7 205.46,258.0 205.56,256.1 205.66,261.9 205.76,262.4 205.86,282.0 205.96,261.7 206.06,251.0 206.16,260.4 206.26,266.3 206.36,254.8 206.46,263.2 206.56,260.7 206.66,267.4 206.76,264.1 206.86,260.4 206.96,263.4 207.06,271.8 207.16,261.7 207.26,263.2 207.37,272.6 207.47,259.9 207.57,267.7 207.67,266.8 207.77,258.6 207.87,264.6 207.97,256.1 208.07,256.7 208.17,265.0 208.27,260.9 208.37,284.5 208.47,257.2 208.57,258.7 208.67,264.4 208.77,253.6 208.87,258.5 208.97,262.1 209.07,263.5 209.17,271.5 209.27,262.6 209.38,259.2 209.48,254.7 209.58,252.4 209.68,257.7 209.78,264.9 209.88,274.6 209.98,258.0 210.08,261.5 210.18,258.6 210.28,266.3 210.38,255.3 210.48,264.0 210.58,263.9 210.68,263.1 210.78,263.5 210.88,275.5 210.98,262.8 211.08,258.9 211.18,260.2 211.29,254.3 211.39,263.8 211.49,255.2 211.59,277.7 211.69,278.2 211.79,265.6 211.89,260.0 211.99,267.3 212.09,258.8 212.19,277.1 212.29,254.8 212.39,254.7 212.49,263.2 212.59,253.7 212.69,255.9 212.79,271.6 212.89,263.9 212.99,296.8 213.09,255.1 213.19,262.4 213.30,261.1 213.40,266.5 213.50,273.5 213.60,270.9 213.70,264.7 213.80,254.9 213.90,251.4 214.00,252.3 214.10,248.2 214.20,255.8 214.30,264.1 214.40,259.1 214.50,261.5 214.60,260.6 214.70,251.8 214.80,253.1 214.90,258.0 215.00,230.6 215.10,257.8 215.21,251.0 215.31,257.2 215.41,263.8 215.51,256.6 215.61,254.4 215.71,275.4 215.81,262.3 215.91,260.3 216.01,256.9 216.11,264.0 216.21,249.9 216.31,244.7 216.41,253.5 216.51,258.6 216.61,266.4 216.71,251.7 216.81,252.4 216.91,252.0 217.01,248.3 217.11,256.8 217.22,268.1 217.32,261.6 217.42,256.5 217.52,257.8 217.62,262.9 217.72,257.3 217.82,257.6 217.92,261.9 218.02,256.4 218.12,247.1 218.22,266.7 218.32,251.8 218.42,255.7 218.52,267.8 218.62,255.2 218.72,257.3 218.82,272.0 218.92,265.6 219.02,255.1 219.13,249.0 219.23,250.0 219.33,257.3 219.43,266.9 219.53,256.8 219.63,259.0 219.73,260.3 219.83,256.0 219.93,249.5 220.03,253.8 220.13,248.1 220.23,251.1 220.33,263.3 220.43,266.0 220.53,253.7 220.63,253.0 220.73,256.5 220.83,251.4 220.93,253.9 221.03,260.2 221.14,269.4 221.24,257.4 221.34,252.2 221.44,253.4 221.54,253.4 221.64,253.1 221.74,254.4 221.84,258.6 221.94,265.7 222.04,260.0 222.14,269.4 222.24,252.7 222.34,253.9 222.44,256.8 222.54,254.7 222.64,253.7 222.74,250.3 222.84,260.6 222.94,266.3 223.05,273.2 223.15,261.2 223.25,272.1 223.35,258.6 223.45,252.2 223.55,273.3 223.65,274.4 223.75,258.7 223.85,263.1 223.95,262.5 224.05,263.6 224.15,265.8 224.25,252.8 224.35,256.9 224.45,262.6 224.55,257.9 224.65,250.7 224.75,252.2 224.85,258.5 224.95,253.0 225.06,260.1 225.16,258.0 225.26,255.2 225.36,259.0 225.46,249.6 225.56,256.8 225.66,281.2 225.76,253.7 225.86,249.4 225.96,252.4 226.06,250.5 226.16,250.4 226.26,256.2 226.36,256.6 226.46,251.8 226.56,259.9 226.66,258.8 226.76,268.1 226.86,259.5 226.97,268.0 227.07,264.9 227.17,254.8 227.27,257.4 227.37,274.7 227.47,271.4 227.57,265.4 227.67,269.4 227.77,262.4 227.87,268.2 227.97,268.5 228.07,271.7 228.17,259.4 228.27,249.7 228.37,253.1 228.47,259.3 228.57,266.1 228.67,255.0 228.77,249.9 228.87,255.3 228.98,261.3 229.08,259.3 229.18,265.1 229.28,254.6 229.38,254.0 229.48,263.1 229.58,271.3 229.68,275.0 229.78,266.6 229.88,260.5 229.98,275.6 230.08,262.7 230.18,254.7 230.28,254.2 230.38,255.4 230.48,255.5 230.58,255.8 230.68,258.9 230.78,261.1 230.89,267.8 230.99,261.6 231.09,262.6 231.19,262.9 231.29,263.5 231.39,254.4 231.49,253.8 231.59,259.8 231.69,261.2 231.79,257.7 231.89,262.6 231.99,263.1 232.09,256.3 232.19,255.2 232.29,279.9 232.39,261.5 232.49,254.7 232.59,252.8 232.69,258.5 232.79,264.4 232.90,260.3 233.00,253.9 233.10,253.7 233.20,255.7 233.30,260.5 233.40,253.9 233.50,256.3 233.60,268.5 233.70,284.3 233.80,259.4 233.90,258.6 234.00,266.5 234.10,265.4 234.20,283.3 234.30,253.9 234.40,251.0 234.50,259.5 234.60,271.5 234.70,265.5 234.81,282.1 234.91,250.0 235.01,247.4 235.11,256.5 235.21,265.3 235.31,266.5 235.41,281.9 235.51,257.8 235.61,254.9 235.71,255.8 235.81,282.2 235.91,269.8 236.01,263.7 236.11,253.6 236.21,264.1 236.31,274.8 236.41,259.8 236.51,265.3 236.61,268.9 236.71,265.3 236.82,250.2 236.92,256.6 237.02,262.9 237.12,248.7 237.22,249.1 237.32,259.0 237.42,255.0 237.52,258.3 237.62,252.6 237.72,257.4 237.82,271.7 237.92,252.4 238.02,258.1 238.12,262.6 238.22,260.6 238.32,253.3 238.42,253.5 238.52,254.8 238.62,252.2 238.73,254.1 238.83,269.3 238.93,257.9 239.03,259.3 239.13,265.9 239.23,257.1 239.33,262.7 239.43,256.9 239.53,249.3 239.63,254.4 239.73,251.7 239.83,253.2 239.93,256.2 240.03,271.3 240.13,264.0 240.23,259.9 240.33,250.2 240.43,260.7 240.53,261.7 240.63,251.5 240.74,270.0 240.84,264.2 240.94,263.1 241.04,260.5 241.14,263.0 241.24,273.1 241.34,282.8 241.44,265.4 241.54,252.9 241.64,267.6 241.74,277.9 241.84,265.6 241.94,272.8 242.04,263.7 242.14,268.8 242.24,280.8 242.34,260.4 242.44,259.6 242.54,269.9 242.65,255.1 242.75,254.4 242.85,267.0 242.95,257.7 243.05,261.5 243.15,253.8 243.25,252.9 243.35,250.3 243.45,249.9 243.55,258.4 243.65,251.3 243.75,257.5 243.85,268.0 243.95,255.1 244.05,249.6 244.15,254.6 244.25,265.5 244.35,266.2 244.45,252.1 244.55,249.2 244.66,253.4 244.76,262.8 244.86,269.8 244.96,262.8 245.06,266.9 245.16,257.1 245.26,257.8 245.36,270.6 245.46,255.2 245.56,275.4 245.66,251.2 245.76,253.5 245.86,261.7 245.96,259.2 246.06,257.1 246.16,259.7 246.26,281.5 246.36,272.3 246.46,257.8 246.57,250.1 246.67,266.3 246.77,252.4 246.87,250.1 246.97,254.5 247.07,252.8 247.17,258.7 247.27,273.5 247.37,250.2 247.47,260.8 247.57,259.3 247.67,261.8 247.77,270.5 247.87,256.2 247.97,248.8 248.07,245.5 248.17,256.7 248.27,255.8 248.37,251.7 248.47,256.3 248.58,271.1 248.68,256.8 248.78,260.9 248.88,258.1 248.98,249.1 249.08,249.8 249.18,245.1 249.28,256.6 249.38,257.4 249.48,249.7 249.58,249.2 249.68,245.1 249.78,245.5 249.88,249.9 249.98,251.6 250.08,265.4 250.18,251.1 250.28,251.9 250.38,280.4 250.49,260.0 250.59,262.6 250.69,259.0 250.79,268.7 250.89,268.0 250.99,269.0 251.09,262.8 251.19,254.0 251.29,252.5 251.39,252.6 251.49,250.7 251.59,260.3 251.69,268.9 251.79,266.6 251.89,255.8 251.99,252.7 252.09,249.8 252.19,256.2 252.29,251.5 252.39,249.6 252.50,252.5 252.60,244.8 252.70,245.9 252.80,257.4 252.90,273.1 253.00,260.4 253.10,264.0 253.20,257.4 253.30,248.8 253.40,255.4 253.50,271.4 253.60,250.8 253.70,249.1 253.80,244.4 253.90,243.5 254.00,245.1 254.10,245.8 254.20,251.5 254.30,254.6 254.41,251.4 254.51,247.7 254.61,246.1 254.71,258.4 254.81,247.8 254.91,243.9 255.01,254.5 255.11,253.2 255.21,255.4 255.31,257.6 255.41,252.1 255.51,260.5 255.61,254.8 255.71,268.9 255.81,250.1 255.91,261.7 256.01,252.7 256.11,258.8 256.21,260.6 256.31,256.1 256.42,252.1 256.52,251.4 256.62,253.5 256.72,258.5 256.82,251.1 256.92,268.2 257.02,258.0 257.12,252.2 257.22,245.1 257.32,240.9 257.42,250.6 257.52,265.2 257.62,250.1 257.72,242.4 257.82,246.2 257.92,264.6 258.02,266.4 258.12,261.8 258.22,266.8 258.33,271.7 258.43,265.5 258.53,259.8 258.63,249.4 258.73,250.0 258.83,254.6 258.93,255.7 259.03,247.8 259.13,252.4 259.23,251.3 259.33,251.7 259.43,247.3 259.53,256.6 259.63,247.5 259.73,260.0 259.83,244.4 259.93,247.1 260.03,269.2 260.13,248.8 260.23,250.6 260.34,251.5 260.44,249.2 260.54,256.0 260.64,265.5 260.74,257.5 260.84,255.7 260.94,258.5 261.04,274.9 261.14,266.2 261.24,257.6 261.34,251.0 261.44,252.3 261.54,247.9 261.64,248.0 261.74,253.1 261.84,243.9 261.94,218.4 262.04,226.2 262.14,238.3 262.25,222.0 262.35,221.0 262.45,228.6 262.55,236.5 262.65,226.7 262.75,246.0 262.85,225.7 262.95,229.7 263.05,229.8 263.15,226.6 263.25,216.7 263.35,217.1 263.45,259.1 263.55,225.3 263.65,232.9 263.75,240.2 263.85,221.2 263.95,219.8 264.05,223.1 264.15,244.0 264.26,229.1 264.36,224.0 264.46,218.5 264.56,221.3 264.66,230.3 264.76,221.9 264.86,218.7 264.96,221.0 265.06,243.0 265.16,228.4 265.26,250.8 265.36,230.3 265.46,232.1 265.56,236.5 265.66,249.9 265.76,221.2 265.86,218.4 265.96,221.8 266.06,222.8 266.17,230.9 266.27,232.3 266.37,220.2 266.47,213.0 266.57,237.7 266.67,228.0 266.77,236.5 266.87,217.8 266.97,234.0 267.07,241.2 267.17,227.7 267.27,228.9 267.37,228.3 267.47,222.7 267.57,219.5 267.67,215.6 267.77,223.2 267.87,223.9 267.97,224.6 268.07,255.2 268.18,238.1 268.28,223.2 268.38,213.8 268.48,222.3 268.58,223.0 268.68,221.2 268.78,230.6 268.88,233.5 268.98,256.1 269.08,225.6 269.18,221.6 269.28,239.6 269.38,227.0 269.48,227.9 269.58,232.5 269.68,236.3 269.78,241.0 269.88,226.7 269.98,218.1 270.09,225.6 270.19,227.0 270.29,225.1 270.39,220.4 270.49,220.3 270.59,222.2 270.69,227.2 270.79,225.0 270.89,219.2 270.99,219.0 271.09,223.0 271.19,213.7 271.29,238.2 271.39,219.2 271.49,226.6 271.59,215.8 271.69,217.0 271.79,234.4 271.89,221.4 271.99,224.6 272.10,240.0 272.20,228.6 272.30,235.7 272.40,224.8 272.50,258.8 272.60,233.9 272.70,219.4 272.80,230.5 272.90,218.2 273.00,222.0 273.10,230.2 273.20,217.5 273.30,222.4 273.40,248.1 273.50,223.6 273.60,222.8 273.70,244.1 273.80,232.2 273.90,228.4 274.01,229.6 274.11,217.7 274.21,214.1 274.31,214.5 274.41,223.2 274.51,239.3 274.61,231.2 274.71,222.7 274.81,228.1 274.91,220.7 275.01,217.3 275.11,223.7 275.21,232.8 275.31,221.7 275.41,225.8 275.51,220.3 275.61,223.7 275.71,235.5 275.81,228.3 275.91,218.0 276.02,215.3 276.12,217.1 276.22,235.2 276.32,218.1 276.42,225.8 276.52,232.3 276.62,215.9 276.72,222.7 276.82,232.9 276.92,242.1 277.02,226.8 277.12,234.6 277.22,218.9 277.32,218.9 277.42,242.5 277.52,230.0 277.62,233.9 277.72,224.7 277.82,228.6 277.93,226.7 278.03,217.3 278.13,212.3 278.23,214.2 278.33,223.0 278.43,239.5 278.53,227.2 278.63,214.0 278.73,218.3 278.83,217.8 278.93,215.7 279.03,214.5 279.13,214.0 279.23,238.2 279.33,222.0 279.43,212.9 279.53,215.4 279.63,221.0 279.73,219.4 279.83,232.3 279.94,238.3 280.04,239.8 280.14,218.1 280.24,232.5 280.34,218.4 280.44,233.3 280.54,239.5 280.64,225.9 280.74,236.7 280.84,247.4 280.94,224.4 281.04,228.9 281.14,236.1 281.24,229.4 281.34,231.6 281.44,227.5 281.54,227.9 281.64,239.5 281.74,223.3 281.85,224.8 281.95,233.6 282.05,248.5 282.15,228.1 282.25,226.3 282.35,251.1 282.45,232.0 282.55,223.8 282.65,233.8 282.75,221.3 282.85,219.8 282.95,225.6 283.05,225.9 283.15,242.7 283.25,226.3 283.35,241.8 283.45,251.7 283.55,225.8 283.65,226.2 283.75,251.0 283.86,227.6 283.96,222.0 284.06,215.6 284.16,226.2 284.26,231.4 284.36,222.8 284.46,229.4 284.56,230.0 284.66,235.9 284.76,232.4 284.86,227.1 284.96,231.6 285.06,221.9 285.16,221.4 285.26,235.7 285.36,240.1 285.46,217.6 285.56,215.6 285.66,224.2 285.77,227.4 285.87,224.7 285.97,231.1 286.07,245.6 286.17,231.6 286.27,226.4 286.37,247.7 286.47,219.9 286.57,223.1 286.67,237.6 286.77,235.4 286.87,228.4 286.97,225.8 287.07,217.6 287.17,215.2 287.27,223.1 287.37,228.4 287.47,233.9 287.57,234.7 287.67,231.0 287.78,228.7 287.88,237.1 287.98,222.9 288.08,217.9 288.18,222.3 288.28,232.3 288.38,229.1 288.48,223.3 288.58,223.5 288.68,235.4 288.78,232.3 288.88,214.0 288.98,219.2 289.08,226.1 289.18,232.4 289.28,236.9 289.38,227.3 289.48,225.2 289.58,215.0 289.69,223.3 289.79,254.9 289.89,241.7 289.99,241.1 290.09,230.4 290.19,222.3 290.29,220.9 290.39,226.2 290.49,219.5 290.59,221.4 290.69,223.2 290.79,223.7 290.89,232.0 290.99,234.8 291.09,229.4 291.19,224.7 291.29,224.3 291.39,230.3 291.49,225.4 291.59,233.1 291.70,250.6 291.80,236.5 291.90,232.4 292.00,224.3 292.10,239.5 292.20,236.8 292.30,244.3 292.40,227.2 292.50,225.0 292.60,243.7 292.70,227.9 292.80,217.3 292.90,214.2 293.00,220.5 293.10,224.7 293.20,227.5 293.30,223.1 293.40,220.5 293.50,214.8 293.61,236.5 293.71,229.9 293.81,241.7 293.91,234.9 294.01,225.0 294.11,224.8 294.21,232.3 294.31,255.4 294.41,222.7 294.51,217.7 294.61,218.6 294.71,233.5 294.81,243.3 294.91,229.0 295.01,238.6 295.11,219.7 295.21,232.5 295.31,238.5 295.41,235.8 295.51,235.8 295.62,223.1 295.72,223.3 295.82,223.8 295.92,226.7 296.02,224.6 296.12,223.2 296.22,220.4 296.32,219.9 296.42,234.6 296.52,221.6 296.62,227.0 296.72,228.5 296.82,248.4 296.92,230.8 297.02,232.0 297.12,226.5 297.22,231.1 297.32,236.0 297.42,231.0 297.53,230.2 297.63,222.8 297.73,247.1 297.83,224.2 297.93,216.4 298.03,217.6 298.13,217.4 298.23,223.8 298.33,229.3 298.43,230.6 298.53,230.2 298.63,219.6 298.73,229.6 298.83,221.3 298.93,222.6 299.03,229.2 299.13,238.4 299.23,228.7 299.33,218.6 299.43,211.6 299.54,214.3 299.64,227.0 299.74,225.7 299.84,241.4 299.94,239.0 300.04,230.9 300.14,229.0 300.24,226.4 300.34,258.2 300.44,223.1 300.54,217.9 300.64,230.9 300.74,233.3 300.84,226.0 300.94,228.4 301.04,223.6 301.14,220.8 301.24,226.8 301.34,222.3 301.45,222.0 301.55,236.5 301.65,222.6 301.75,221.1 301.85,222.7 301.95,221.2 302.05,219.4 302.15,250.4 302.25,225.4 302.35,232.4 302.45,256.3 302.55,236.8 302.65,224.8 302.75,227.2 302.85,242.3 302.95,224.8 303.05,223.7 303.15,232.6 303.25,234.9 303.35,219.6 303.46,225.3 303.56,214.7 303.66,220.9 303.76,226.2 303.86,232.5 303.96,225.1 304.06,221.4 304.16,226.4 304.26,232.1 304.36,239.6 304.46,220.5 304.56,216.1 304.66,214.4 304.76,218.1 304.86,221.2 304.96,227.1 305.06,223.9 305.16,225.2 305.26,228.5 305.37,237.2 305.47,236.5 305.57,226.7 305.67,216.8 305.77,219.8 305.87,221.6 305.97,242.2 306.07,237.1 306.17,224.8 306.27,215.3 306.37,224.5 306.47,228.1 306.57,228.4 306.67,218.7 306.77,236.7 306.87,220.1 306.97,218.0 307.07,222.4 307.17,237.4 307.27,234.7 307.38,220.1 307.48,216.7 307.58,228.6 307.68,225.5 307.78,226.5 307.88,243.1 307.98,229.2 308.08,228.1 308.18,236.2 308.28,226.9 308.38,225.5 308.48,241.3 308.58,249.1 308.68,232.3 308.78,239.9 308.88,248.6 308.98,217.2 309.08,214.7 309.18,229.4 309.29,219.5 309.39,231.1 309.49,219.5 309.59,216.3 309.69,224.9 309.79,236.4 309.89,225.5 309.99,219.1 310.09,231.7 310.19,241.6 310.29,228.0 310.39,234.9 310.49,249.7 310.59,231.6 310.69,239.6 310.79,231.6 310.89,231.8 310.99,240.5 311.09,226.3 311.19,231.4 311.30,242.9 311.40,257.9 311.50,223.8 311.60,222.6 311.70,227.0 311.80,225.6 311.90,241.6 312.00,241.8 312.10,226.1 312.20,240.5 312.30,244.7 312.40,222.8 312.50,215.0 312.60,213.6 312.70,216.2 312.80,223.4 312.90,243.9 313.00,240.2 313.10,241.4 313.21,232.1 313.31,222.2 313.41,222.5 313.51,220.1 313.61,221.5 313.71,239.8 313.81,257.9 313.91,221.8 314.01,225.8 314.11,221.9 314.21,220.7 314.31,235.8 314.41,227.6 314.51,251.2 314.61,240.1 314.71,241.9 314.81,228.4 314.91,247.1 315.01,226.9 315.11,231.4 315.22,250.3 315.32,227.7 315.42,229.7 315.52,218.3 315.62,210.8 315.72,219.1 315.82,237.3 315.92,232.3 316.02,222.7 316.12,225.0 316.22,220.7 316.32,220.0 316.42,220.5 316.52,224.1 316.62,234.4 316.72,222.5 316.82,223.7 316.92,232.2 317.02,220.3 317.13,225.5 317.23,229.0 317.33,240.3 317.43,233.1 317.53,229.4 317.63,215.7 317.73,218.2 317.83,211.2 317.93,213.9 318.03,219.2 318.13,234.0 318.23,237.2 318.33,225.5 318.43,232.2 318.53,245.2 318.63,221.6 318.73,229.7 318.83,237.1 318.93,230.2 319.03,226.3 319.14,222.2 319.24,227.0 319.34,218.8 319.44,220.4 319.54,220.6 319.64,222.7 319.74,257.8 319.84,232.1 319.94,231.0 320.04,225.5 320.14,231.1 320.24,237.1 320.34,228.3 320.44,224.5 320.54,220.5 320.64,249.1 320.74,239.5 320.84,221.3 320.94,222.3 321.05,226.5 321.15,223.7 321.25,220.8 321.35,228.2 321.45,226.7 321.55,248.1 321.65,243.0 321.75,222.7 321.85,237.5 321.95,230.4 322.05,234.3 322.15,240.7 322.25,222.5 322.35,221.9 322.45,231.7 322.55,233.6 322.65,228.3 322.75,245.2 322.85,226.4 322.95,233.6 323.06,232.0 323.16,235.1 323.26,212.5 323.36,212.5 323.46,220.7 323.56,223.0 323.66,223.6 323.76,240.4 323.86,236.9 323.96,230.2 324.06,220.7 324.16,221.4 324.26,246.9 324.36,216.0 324.46,224.7 324.56,254.1 324.66,223.8 324.76,217.2 324.86,234.9 324.97,223.8 325.07,220.3 325.17,212.9 325.27,217.8 325.37,234.4 325.47,214.5 325.57,217.9 325.67,222.0 325.77,217.4 325.87,235.3 325.97,226.2 326.07,216.5 326.17,226.9 326.27,230.5 326.37,231.8 326.47,224.3 326.57,225.7 326.67,237.2 326.77,225.6 326.87,230.7 326.98,230.2 327.08,239.0 327.18,222.8 327.28,233.9 327.38,236.0 327.48,226.4 327.58,229.1 327.68,219.9 327.78,215.8 327.88,233.7 327.98,217.6 328.08,216.8 328.18,218.0 328.28,224.7 328.38,247.2 328.48,224.9 328.58,215.1 328.68,225.4 328.78,245.8 328.89,218.7 328.99,211.9 329.09,220.1 329.19,248.5 329.29,218.1 329.39,211.1 329.49,218.5 329.59,220.8 329.69,213.5 329.79,224.1 329.89,232.1 329.99,216.2 330.09,218.0 330.19,237.2 330.29,254.2 330.39,240.5 330.49,230.9 330.59,220.8 330.69,223.0 330.79,222.7 330.90,219.6 331.00,226.3 331.10,222.3 331.20,230.5 331.30,218.6 331.40,223.9 331.50,222.2 331.60,227.3 331.70,237.3 331.80,236.3 331.90,225.0 332.00,227.1 332.10,220.8 332.20,219.5 332.30,224.1 332.40,237.6 332.50,239.7 332.60,225.7 332.70,215.8 332.81,210.1 332.91,219.4 333.01,230.1 333.11,224.7 333.21,221.9 333.31,246.5 333.41,233.4 333.51,228.2 333.61,225.8 333.71,248.8 333.81,231.6 333.91,235.4 334.01,221.6 334.11,226.5 334.21,223.7 334.31,225.8 334.41,233.1 334.51,226.0 334.61,234.1 334.71,223.9 334.82,212.8 334.92,230.7 335.02,233.6 335.12,225.6 335.22,227.9 335.32,247.1 335.42,223.3 335.52,232.6 335.62,242.8 335.72,226.3 335.82,224.6 335.92,222.3 336.02,220.9 336.12,237.4 336.22,231.5 336.32,241.9 336.42,231.1 336.52,219.7 336.62,217.4 336.73,221.2 336.83,225.8 336.93,236.5 337.03,221.2 337.13,223.7 337.23,221.6 337.33,232.0 337.43,224.1 337.53,224.2 337.63,229.9 337.73,227.5 337.83,218.1 337.93,222.4 338.03,252.9 338.13,224.9 338.23,227.1 338.33,223.5 338.43,222.5 338.53,226.9 338.63,223.7 338.74,231.2 338.84,255.8 338.94,237.2 339.04,245.9 339.14,249.6 339.24,239.6 339.34,240.5 339.44,235.2 339.54,242.7 339.64,247.5 339.74,229.2 339.84,216.4 339.94,210.2 340.04,210.3 340.14,215.5 340.24,212.7 340.34,213.2 340.44,227.6 340.54,228.5 340.65,226.5 340.75,242.7 340.85,242.2 340.95,223.0 341.05,222.5 341.15,225.2 341.25,227.3 341.35,214.3 341.45,210.4 341.55,215.7 341.65,225.6 341.75,249.8 341.85,227.4 341.95,220.1 342.05,228.8 342.15,225.0 342.25,235.4 342.35,226.8 342.45,223.0 342.55,213.0 342.66,223.0 342.76,226.5 342.86,224.1 342.96,237.0 343.06,234.1 343.16,227.4 343.26,223.0 343.36,224.9 343.46,216.7 343.56,224.0 343.66,224.0 343.76,227.1 343.86,224.9 343.96,239.4 344.06,229.5 344.16,249.5 344.26,234.2 344.36,225.1 344.46,226.4 344.57,225.8 344.67,220.3 344.77,250.9 344.87,225.3 344.97,220.5 345.07,218.8 345.17,217.3 345.27,220.3 345.37,227.0 345.47,225.8 345.57,222.3 345.67,228.3 345.77,238.6 345.87,240.1 345.97,230.6 346.07,225.0 346.17,227.0 346.27,239.2 346.37,229.4 346.47,227.4 346.58,228.0 346.68,226.1 346.78,233.4 346.88,212.2 346.98,225.1 347.08,222.7 347.18,231.9 347.28,240.1 347.38,221.0 347.48,217.5 347.58,247.1 347.68,224.8 347.78,237.6 347.88,236.7 347.98,221.2 348.08,216.7 348.18,219.8 348.28,257.1 348.38,230.4 348.49,237.5 348.59,218.9 348.69,218.3 348.79,218.3 348.89,219.8 348.99,221.4 349.09,224.4 349.19,229.8 349.29,236.1 349.39,240.5 349.49,220.5 349.59,213.4 349.69,221.0 349.79,235.2 349.89,218.5 349.99,221.3 350.09,229.8 350.19,242.6 350.29,238.2 350.39,246.5 350.50,240.0 350.60,222.6 350.70,225.0 350.80,226.4 350.90,219.2 351.00,235.4 351.10,254.3 351.20,219.5 351.30,220.1 351.40,227.7 351.50,221.6 351.60,225.1 351.70,221.5 351.80,225.5 351.90,230.2 352.00,228.8 352.10,227.1 352.20,228.9 352.30,224.6 352.41,237.3 352.51,244.2 352.61,226.3 352.71,227.3 352.81,227.8 352.91,215.2 353.01,225.9 353.11,238.7 353.21,230.1 353.31,225.8 353.41,227.2 353.51,232.8 353.61,234.0 353.71,228.3 353.81,228.0 353.91,230.6 354.01,219.2 354.11,220.4 354.21,220.8 354.31,222.3 354.42,227.9 354.52,216.7 354.62,220.2 354.72,219.8 354.82,224.2 354.92,214.5 355.02,249.2 355.12,224.6 355.22,230.4 355.32,237.5 355.42,215.4 355.52,218.0 355.62,230.9 355.72,218.4 355.82,219.8 355.92,229.6 356.02,247.1 356.12,231.6 356.22,224.8 356.33,233.1 356.43,226.7 356.53,226.8 356.63,224.0 356.73,233.1 356.83,223.4 356.93,229.8 357.03,219.9 357.13,221.8 357.23,219.5 357.33,222.5 357.43,234.3 357.53,228.4 357.63,232.5 357.73,222.0 357.83,220.3 357.93,227.3 358.03,248.5 358.13,239.3 358.23,235.0 358.34,216.4 358.44,231.4 358.54,256.9 358.64,227.8 358.74,235.7 358.84,217.4 358.94,228.0 359.04,219.2 359.14,210.3 359.24,213.7 359.34,232.1 359.44,228.6 359.54,229.2 359.64,250.7 359.74,233.2 359.84,235.6 359.94,227.2 360.04,237.7 360.14,221.5 360.25,224.6 360.35,230.4 360.45,231.1 360.55,226.9 360.65,220.2 360.75,214.8 360.85,229.4 360.95,231.9 361.05,239.1 361.15,220.7 361.25,233.2 361.35,219.1 361.45,231.0 361.55,223.3 361.65,210.8 361.75,223.8 361.85,224.1 361.95,226.5 362.05,226.3 362.15,226.6 362.26,218.7 362.36,212.9 362.46,221.2 362.56,241.8 362.66,229.7 362.76,232.1 362.86,234.1 362.96,230.9 363.06,226.6 363.16,227.6 363.26,224.0 363.36,229.8 363.46,216.1 363.56,208.6 363.66,211.8 363.76,215.0 363.86,230.9 363.96,231.6 364.06,216.7 364.17,212.9 364.27,224.2 364.37,241.8 364.47,231.2 364.57,240.7 364.67,224.3 364.77,217.3 364.87,256.7 364.97,215.1 365.07,212.9 365.17,232.7 365.27,220.6 365.37,218.7 365.47,240.5 365.57,220.5 365.67,223.5 365.77,221.8 365.87,222.2 365.97,233.4 366.07,224.5 366.18,215.8 366.28,218.0 366.38,224.8 366.48,292.2 366.58,227.3 366.68,218.0 366.78,214.6 366.88,221.3 366.98,246.1 367.08,212.3 367.18,212.4 367.28,222.9 367.38,223.7 367.48,226.4 367.58,211.1 367.68,208.6 367.78,219.4 367.88,244.6 367.98,226.9 368.09,218.3 368.19,226.5 368.29,233.7 368.39,228.2 368.49,220.2 368.59,222.0 368.69,222.5 368.79,235.3 368.89,238.9 368.99,220.2 369.09,226.3 369.19,224.0 369.29,218.4 369.39,238.8 369.49,244.9 369.59,245.0 369.69,238.4 369.79,227.9 369.89,232.0 369.99,224.8 370.10,240.3 370.20,245.5 370.30,242.2 370.40,234.2 370.50,221.8 370.60,219.0 370.70,220.5 370.80,239.7 370.90,218.8 371.00,215.3 371.10,223.2 371.20,224.2 371.30,225.9 371.40,232.9 371.50,221.0 371.60,217.0 371.70,215.7 371.80,219.2 371.90,232.5 372.01,227.5 372.11,216.2 372.21,221.4 372.31,246.6 372.41,217.7 372.51,216.9 372.61,243.4 372.71,214.2 372.81,219.7 372.91,222.7 373.01,230.5 373.11,219.7 373.21,219.8 373.31,221.7 373.41,221.6 373.51,220.0 373.61,218.6 373.71,212.4 373.81,213.2 373.91,223.9 374.02,233.7 374.12,233.0 374.22,231.6 374.32,221.8 374.42,217.2 374.52,221.4 374.62,229.9 374.72,243.6 374.82,223.2 374.92,247.8 375.02,245.6 375.12,236.0 375.22,225.2 375.32,241.5 375.42,228.9 375.52,229.6 375.62,239.0 375.72,232.2 375.82,216.7 375.93,218.8 376.03,236.3 376.13,245.5 376.23,213.2 376.33,218.4 376.43,225.3 376.53,237.0 376.63,256.4 376.73,228.8 376.83,228.0 376.93,256.4 377.03,229.3 377.13,220.8 377.23,224.4 377.33,238.5 377.43,238.6 377.53,237.7 377.63,241.9 377.73,238.9 377.83,217.0 377.94,224.9 378.04,215.8 378.14,216.6 378.24,215.2 378.34,221.7 378.44,217.2 378.54,224.7 378.64,227.7 378.74,244.0 378.84,217.5 378.94,217.6 379.04,230.0 379.14,220.8 379.24,231.3 379.34,224.1 379.44,219.0 379.54,217.6 379.64,238.7 379.74,222.9 379.85,228.5 379.95,216.4 380.05,210.3 380.15,216.6 380.25,227.1 380.35,238.7 380.45,223.9 380.55,228.6 380.65,232.6 380.75,218.3 380.85,226.6 380.95,214.5 381.05,213.5 381.15,220.0 381.25,223.6 381.35,216.7 381.45,221.5 381.55,231.4 381.65,233.1 381.75,215.1 381.86,210.7 381.96,215.3 382.06,227.9 382.16,220.4 382.26,217.7 382.36,220.8 382.46,229.8 382.56,222.2 382.66,217.3 382.76,230.9 382.86,224.4 382.96,229.0 383.06,244.7 383.16,244.3 383.26,223.4 383.36,224.6 383.46,223.5 383.56,223.2 383.66,227.3 383.77,220.6 383.87,218.4 383.97,223.5 384.07,218.8 384.17,212.3 384.27,212.2 384.37,221.1 384.47,222.8 384.57,215.3 384.67,221.5 384.77,256.2 384.87,225.8 384.97,216.3 385.07,237.6 385.17,223.9 385.27,235.4 385.37,240.7 385.47,217.3 385.57,216.4 385.67,218.7 385.78,213.7 385.88,211.7 385.98,215.5 386.08,220.1 386.18,221.7 386.28,230.3 386.38,220.9 386.48,219.5 386.58,221.9 386.68,217.6 386.78,215.8 386.88,226.5 386.98,226.5 387.08,219.9 387.18,223.7 387.28,246.7 387.38,229.2 387.48,233.4 387.58,239.3 387.69,229.5 387.79,216.8 387.89,227.6 387.99,220.9 388.09,224.8 388.19,221.6 388.29,244.4 388.39,231.5 388.49,229.8 388.59,232.0 388.69,233.7 388.79,232.7 388.89,227.6 388.99,221.3 389.09,215.4 389.19,221.3 389.29,224.4 389.39,222.1 389.49,223.3 389.59,256.1 389.70,231.1 389.80,225.5 389.90,233.7 390.00,235.4 390.10,218.8 390.20,225.6 390.30,215.9 390.40,215.9 390.50,226.0 390.60,236.5 390.70,213.8 390.80,212.6 390.90,223.5 391.00,217.3 391.10,237.7 391.20,219.0 391.30,226.5 391.40,215.4 391.50,216.1 391.61,238.2 391.71,252.6 391.81,227.6 391.91,211.4 392.01,212.3 392.11,214.2 392.21,219.6 392.31,220.7 392.41,247.7 392.51,240.6 392.61,224.4 392.71,218.1 392.81,225.6 392.91,229.6 393.01,226.0 393.11,220.0 393.21,239.0 393.31,245.6 393.41,226.9 393.51,218.2 393.62,221.1 393.72,241.0 393.82,231.7 393.92,227.6 394.02,239.9 394.12,235.2 394.22,250.5 394.32,249.1 394.42,221.6 394.52,216.5 394.62,219.9 394.72,228.8 394.82,230.0 394.92,227.4 395.02,215.1 395.12,211.0 395.22,220.0 395.32,215.2 395.42,217.3 395.53,217.3 395.63,223.7 395.73,238.9 395.83,225.1 395.93,220.6 396.03,218.6 396.13,219.7 396.23,220.1 396.33,225.2 396.43,226.7 396.53,224.6 396.63,220.3 396.73,247.6 396.83,234.5 396.93,221.7 397.03,256.0 397.13,219.1 397.23,231.3 397.33,219.0 397.43,217.1 397.54,232.3 397.64,224.7 397.74,222.0 397.84,234.6 397.94,227.0 398.04,243.4 398.14,224.9 398.24,238.2 398.34,249.1 398.44,241.2 398.54,230.7 398.64,224.1 398.74,231.8 398.84,245.0 398.94,238.3 399.04,239.5 399.14,247.6 399.24,226.4 399.34,211.9 399.45,217.2 399.55,227.1 399.65,214.1 399.75,216.1 399.85,228.5 399.95,221.0 400.05,226.9 400.15,237.0 400.25,237.9 400.35,235.1 400.45,222.5 400.55,222.2 400.65,229.9 400.75,219.3 400.85,220.8 400.95,233.8 401.05,235.2 401.15,223.3 401.25,211.4 401.35,210.5 401.46,226.1 401.56,221.9 401.66,214.3 401.76,218.7 401.86,231.7 401.96,236.4 402.06,218.0 402.16,210.7 402.26,212.6 402.36,236.6 402.46,255.8 402.56,213.8 402.66,214.7 402.76,219.2 402.86,212.2 402.96,247.6 403.06,249.5 403.16,217.9 403.26,232.3 403.37,224.9 403.47,221.5 403.57,229.8 403.67,220.6 403.77,211.2 403.87,214.5 403.97,231.2 404.07,250.2 404.17,229.3 404.27,255.8 404.37,222.0 404.47,215.2 404.57,226.1 404.67,244.4 404.77,226.9 404.87,223.4 404.97,238.8 405.07,255.8 405.17,216.6 405.27,214.3 405.38,241.5 405.48,230.7 405.58,218.5 405.68,225.7 405.78,213.9 405.88,221.6 405.98,226.9 406.08,235.0 406.18,247.9 406.28,218.3 406.38,216.2 406.48,220.6 406.58,213.4 406.68,219.4 406.78,250.0 406.88,234.7 406.98,222.6 407.08,225.5 407.18,228.2 407.29,240.7 407.39,219.0 407.49,227.1 407.59,227.0 407.69,225.1 407.79,229.4 407.89,251.2 407.99,222.9 408.09,228.3 408.19,218.8 408.29,217.6 408.39,206.6 408.49,214.1 408.59,229.7 408.69,235.4 408.79,236.1 408.89,225.1 408.99,227.3 409.09,226.0 409.19,219.2 409.30,219.5 409.40,228.1 409.50,232.3 409.60,226.0 409.70,235.4 409.80,223.5 409.90,217.4 410.00,224.8 410.10,226.1 410.20,245.1 410.30,233.3 410.40,233.7 410.50,226.4 410.60,223.6 410.70,226.5 410.80,237.4 410.90,238.7 411.00,245.6 411.10,230.5 411.21,228.1 411.31,253.8 411.41,240.2 411.51,223.3 411.61,222.6 411.71,222.1 411.81,221.8 411.91,221.3 412.01,213.7 412.11,220.6 412.21,239.4 412.31,226.2 412.41,240.6 412.51,216.5 412.61,213.5 412.71,229.8 412.81,215.5 412.91,218.8 413.01,220.7 413.11,218.1 413.22,226.8 413.32,255.3 413.42,239.6 413.52,231.7 413.62,219.2 413.72,227.7 413.82,224.1 413.92,221.4 414.02,220.2 414.12,233.3 414.22,229.4 414.32,215.8 414.42,216.8 414.52,238.1 414.62,225.9 414.72,224.4 414.82,215.8 414.92,219.6 415.02,226.6 415.13,230.2 415.23,231.6 415.33,241.2 415.43,235.9 415.53,234.4 415.63,224.3 415.73,237.2 415.83,244.1 415.93,230.4 416.03,225.3 416.13,212.5 416.23,238.4 416.33,219.3 416.43,221.3 416.53,222.9 416.63,220.1 416.73,223.6 416.83,222.2 416.93,213.4 417.03,213.2 417.14,217.7 417.24,225.4 417.34,231.5 417.44,240.4 417.54,222.2 417.64,227.0 417.74,218.2 417.84,213.9 417.94,222.3 418.04,235.4 418.14,220.4 418.24,244.4 418.34,224.1 418.44,221.4 418.54,229.4 418.64,219.2 418.74,212.5 418.84,216.5 418.94,221.9 419.05,220.1 419.15,231.6 419.25,221.7 419.35,221.6 419.45,235.5 419.55,221.0 419.65,248.5 419.75,224.1 419.85,223.4 419.95,228.6 420.05,248.6 420.15,255.4 420.25,235.1 420.35,230.9 420.45,223.5 420.55,217.6 420.65,222.3 420.75,227.1 420.85,213.0 420.95,218.3 421.06,212.2 421.16,219.1 421.26,213.4 421.36,213.4 421.46,227.1 421.56,223.0 421.66,218.7 421.76,234.4 421.86,226.0 421.96,213.8 422.06,227.2 422.16,215.4 422.26,222.6 422.36,240.7 422.46,215.1 422.56,219.5 422.66,221.5 422.76,228.8 422.86,238.3 422.97,233.1 423.07,224.4 423.17,246.7 423.27,220.1 423.37,220.7 423.47,206.6 423.57,210.7 423.67,222.9 423.77,220.2 423.87,228.7 423.97,211.9 424.07,215.6 424.17,227.5 424.27,235.3 424.37,224.0 424.47,230.6 424.57,239.1 424.67,220.3 424.77,221.1 424.87,233.8 424.98,229.0 425.08,232.3 425.18,223.1 425.28,230.7 425.38,231.1 425.48,250.0 425.58,228.6 425.68,233.4 425.78,235.7 425.88,226.5 425.98,220.6 426.08,223.6 426.18,228.5 426.28,242.4 426.38,218.1 426.48,226.0 426.58,218.1 426.68,213.4 426.78,211.3 426.89,218.0 426.99,220.0 427.09,217.3 427.19,213.2 427.29,223.1 427.39,234.8 427.49,234.3 427.59,238.2 427.69,223.2 427.79,228.5 427.89,222.7 427.99,236.8 428.09,228.2 428.19,232.6 428.29,259.7 428.39,258.2 428.49,251.3 428.59,247.3 428.69,262.0 428.79,260.6 428.90,254.2 429.00,260.5 429.10,242.2 429.20,239.4 429.30,242.3 429.40,258.2 429.50,259.8 429.60,252.5 429.70,245.8 429.80,253.1 429.90,248.0 430.00,246.0 430.10,255.1 430.20,255.3 430.30,257.2 430.40,251.0 430.50,248.6 430.60,250.6 430.70,268.8 430.81,257.0 430.91,252.2 431.01,253.3 431.11,259.3 431.21,254.6 431.31,244.5 431.41,239.9 431.51,249.8 431.61,260.1 431.71,255.9 431.81,257.7 431.91,248.8 432.01,262.7 432.11,241.1 432.21,244.1 432.31,252.5 432.41,256.4 432.51,273.0 432.61,259.1 432.71,258.4 432.82,282.7 432.92,253.3 433.02,265.6 433.12,262.7 433.22,244.1 433.32,253.3 433.42,245.7 433.52,246.4 433.62,245.1 433.72,246.2 433.82,250.3 433.92,239.4 434.02,239.9 434.12,241.9 434.22,243.7 434.32,250.4 434.42,276.6 434.52,243.2 434.62,243.8 434.73,260.1 434.83,258.4 434.93,254.2 435.03,268.4 435.13,255.8 435.23,249.8 435.33,260.4 435.43,249.5 435.53,260.1 435.63,267.2 435.73,264.7 435.83,251.7 435.93,267.4 436.03,262.4 436.13,255.7 436.23,254.2 436.33,245.7 436.43,239.3 436.53,264.7 436.63,241.9 436.74,241.8 436.84,240.6 436.94,238.7 437.04,240.1 437.14,252.1 437.24,252.1 437.34,247.2 437.44,282.7 437.54,259.7 437.64,267.3 437.74,251.9 437.84,244.8 437.94,249.6 438.04,265.4 438.14,267.4 438.24,257.5 438.34,253.6 438.44,262.2 438.54,257.3 438.65,249.0 438.75,238.2 438.85,240.1 438.95,243.0 439.05,267.5 439.15,245.5 439.25,262.6 439.35,266.9 439.45,261.4 439.55,258.8 439.65,249.7 439.75,240.5 439.85,255.0 439.95,268.3 440.05,251.5 440.15,250.3 440.25,247.1 440.35,240.6 440.45,250.8 440.55,258.3 440.66,251.9 440.76,246.6 440.86,240.6 440.96,243.2 441.06,255.4 441.16,245.2 441.26,254.8 441.36,277.1 441.46,259.0 441.56,247.3 441.66,243.9 441.76,251.1 441.86,256.1 441.96,254.8 442.06,270.0 442.16,266.1 442.26,267.1 442.36,255.5 442.46,242.7 442.57,246.3 442.67,280.0 442.77,258.0 442.87,255.0 442.97,245.8 443.07,252.9 443.17,245.7 443.27,242.8 443.37,275.8 443.47,254.9 443.57,244.3 443.67,250.5 443.77,249.0 443.87,245.0 443.97,262.6 444.07,276.9 444.17,263.8 444.27,252.1 444.37,244.7 444.47,244.0 444.58,248.4 444.68,246.2 444.78,246.4 444.88,249.0 444.98,273.3 445.08,254.5 445.18,245.5 445.28,265.0 445.38,258.5 445.48,250.0 445.58,268.1 445.68,250.6 445.78,252.0 445.88,258.6 445.98,256.6 446.08,272.7 446.18,255.1 446.28,262.4 446.38,261.7 446.49,245.3 446.59,238.6 446.69,259.2 446.79,251.3 446.89,260.9 446.99,247.0 447.09,244.0 447.19,241.4 447.29,254.8 447.39,282.7 447.49,257.0 447.59,269.4 447.69,247.9 447.79,251.2 447.89,247.4 447.99,245.8 448.09,251.1 448.19,262.7 448.29,252.6 448.39,266.3 448.50,242.1 448.60,244.4 448.70,254.4 448.80,247.8 448.90,245.0 449.00,243.1 449.10,247.0 449.20,257.4 449.30,250.6 449.40,255.0 449.50,248.0 449.60,261.6 449.70,259.6 449.80,247.0 449.90,242.7 450.00,241.6 450.10,238.6 450.20,242.7 450.30,250.2 450.41,246.4 450.51,252.0 450.61,266.6 450.71,253.0 450.81,245.4 450.91,252.2 451.01,247.4 451.11,240.7 451.21,246.7 451.31,251.9 451.41,246.9 451.51,244.1 451.61,261.8 451.71,251.4 451.81,246.3 451.91,259.6 452.01,251.0 452.11,255.4 452.21,253.2 452.31,259.3 452.42,278.2 452.52,261.8 452.62,263.3 452.72,245.1 452.82,245.2 452.92,251.8 453.02,255.0 453.12,249.5 453.22,250.9 453.32,250.6 453.42,252.4 453.52,245.2 453.62,280.8 453.72,259.5 453.82,282.7 453.92,254.7 454.02,241.7 454.12,245.9 454.22,253.0 454.33,244.5 454.43,239.6 454.53,245.6 454.63,264.8 454.73,261.8 454.83,250.4 454.93,249.6 455.03,253.4 455.13,272.7 455.23,254.9 455.33,254.6 455.43,267.2 455.53,267.6 455.63,255.6 455.73,260.8 455.83,269.6 455.93,251.9 456.03,248.4 456.13,260.4 456.23,263.5 456.34,254.5 456.44,251.1 456.54,244.1 456.64,247.0 456.74,237.7 456.84,237.5 456.94,244.1 457.04,245.4 457.14,245.6 457.24,248.1 457.34,247.0 457.44,253.6 457.54,256.9 457.64,246.8 457.74,255.4 457.84,258.3 457.94,250.7 458.04,251.0 458.14,244.0 458.25,248.0 458.35,252.0 458.45,254.4 458.55,260.3 458.65,248.8 458.75,260.9 458.85,248.1 458.95,238.2 459.05,238.6 459.15,248.8 459.25,249.2 459.35,248.1 459.45,248.8 459.55,262.3 459.65,245.8 459.75,245.1 459.85,250.3 459.95,262.7 460.05,253.4 460.15,250.2 460.26,246.3 460.36,250.9 460.46,264.3 460.56,261.4 460.66,245.6 460.76,254.3 460.86,249.1 460.96,249.7 461.06,253.2 461.16,251.4 461.26,250.1 461.36,252.8 461.46,245.4 461.56,254.7 461.66,255.2 461.76,244.3 461.86,236.0 461.96,244.7 462.06,255.0 462.17,243.9 462.27,264.6 462.37,259.7 462.47,252.7 462.57,276.0 462.67,260.6 462.77,245.0 462.87,245.0 462.97,245.5 463.07,245.0 463.17,239.2 463.27,243.7 463.37,251.9 463.47,258.6 463.57,239.6 463.67,238.7 463.77,240.1 463.87,247.1 463.97,253.4 464.07,257.8 464.18,250.3 464.28,251.8 464.38,274.7 464.48,254.8 464.58,257.4 464.68,240.3 464.78,239.3 464.88,251.5 464.98,253.6 465.08,246.4 465.18,238.0 465.28,240.5 465.38,240.6 465.48,255.2 465.58,248.4 465.68,257.7 465.78,254.5 465.88,254.5 465.98,247.4 466.09,256.5 466.19,263.5 466.29,243.9 466.39,246.1 466.49,239.7 466.59,253.1 466.69,244.7 466.79,242.3 466.89,244.8 466.99,252.7 467.09,260.0 467.19,250.0 467.29,244.7 467.39,264.7 467.49,255.4 467.59,256.4 467.69,241.4 467.79,247.4 467.89,247.7 467.99,256.1 468.10,263.8 468.20,269.1 468.30,276.2 468.40,248.8 468.50,247.5 468.60,273.6 468.70,258.5 468.80,282.7 468.90,253.3 469.00,269.0 469.10,282.7 469.20,252.2 469.30,267.3 469.40,249.2 469.50,269.0 469.60,240.0 469.70,237.5 469.80,256.8 469.90,261.8 470.01,248.6 470.11,242.9 470.21,252.2 470.31,257.1 470.41,254.8 470.51,249.8 470.61,259.1 470.71,248.3 470.81,260.3 470.91,251.9 471.01,250.2 471.11,254.2 471.21,250.8 471.31,255.0 471.41,241.8 471.51,251.0 471.61,254.0 471.71,247.5 471.81,246.0 471.91,254.9 472.02,254.0 472.12,248.3 472.22,245.8 472.32,242.9 472.42,253.0 472.52,259.1 472.62,260.5 472.72,247.2 472.82,262.9 472.92,259.3 473.02,268.0 473.12,245.3 473.22,233.9 473.32,241.4 473.42,246.8 473.52,258.9 473.62,247.6 473.72,247.6 473.82,262.6 473.93,241.4 474.03,237.1 474.13,242.7 474.23,272.4 474.33,249.4 474.43,242.8 474.53,243.6 474.63,250.8 474.73,260.8 474.83,241.7 474.93,235.9 475.03,254.2 475.13,256.6 475.23,247.5 475.33,245.6 475.43,239.6 475.53,262.2 475.63,242.6 475.73,242.9 475.83,243.7 475.94,251.5 476.04,270.4 476.14,262.1 476.24,248.3 476.34,241.1 476.44,245.7 476.54,247.2 476.64,246.4 476.74,249.5 476.84,255.1 476.94,267.7 477.04,252.0 477.14,255.6 477.24,256.5 477.34,262.1 477.44,255.9 477.54,251.9 477.64,252.5 477.74,246.8 477.85,256.7 477.95,250.2 478.05,250.5 478.15,260.5 478.25,264.3 478.35,252.3 478.45,264.6 478.55,253.8 478.65,259.8 478.75,246.5 478.85,243.7 478.95,250.4 479.05,267.7 479.15,240.0 479.25,240.3 479.35,250.7 479.45,275.5 479.55,250.6 479.65,251.1 479.75,264.2 479.86,257.0 479.96,263.0 480.06,250.3 480.16,252.9 480.26,252.1 480.36,238.1 480.46,241.8 480.56,251.4 480.66,277.2 480.76,268.5 480.86,262.4 480.96,277.3 481.06,241.6 481.16,258.2 481.26,255.5 481.36,248.1 481.46,253.0 481.56,261.2 481.66,254.6 481.77,249.5 481.87,256.2 481.97,253.0 482.07,254.0 482.17,257.0 482.27,247.9 482.37,247.4 482.47,266.7 482.57,274.7 482.67,247.6 482.77,247.8 482.87,245.7 482.97,248.8 483.07,270.5 483.17,260.8 483.27,264.8 483.37,259.0 483.47,243.2 483.57,243.0 483.67,241.9 483.78,243.8 483.88,250.1 483.98,261.6 484.08,253.2 484.18,255.6 484.28,267.4 484.38,255.4 484.48,239.5 484.58,244.3 484.68,259.4 484.78,247.1 484.88,245.2 484.98,256.0 485.08,240.8 485.18,241.6 485.28,247.9 485.38,255.3 485.48,256.8 485.58,250.1 485.69,245.9 485.79,252.4 485.89,258.9 485.99,262.1 486.09,268.1 486.19,256.9 486.29,249.8 486.39,269.7 486.49,245.9 486.59,247.4 486.69,242.6 486.79,245.4 486.89,282.2 486.99,262.8 487.09,255.7 487.19,244.1 487.29,238.1 487.39,239.2 487.49,242.7 487.59,262.6 487.70,246.6 487.80,266.5 487.90,258.3 488.00,249.1 488.10,243.0 488.20,251.6 488.30,263.0 488.40,274.2 488.50,249.5 488.60,249.8 488.70,261.6 488.80,250.3 488.90,251.9 489.00,259.9 489.10,246.5 489.20,247.1 489.30,252.8 489.40,253.1 489.50,246.6 489.61,251.3 489.71,249.1 489.81,282.6 489.91,266.9 490.01,249.5 490.11,239.6 490.21,247.1 490.31,254.1 490.41,246.3 490.51,253.4 490.61,254.9 490.71,246.6 490.81,250.4 490.91,247.4 491.01,250.5 491.11,271.5 491.21,260.0 491.31,248.0 491.41,263.1 491.51,253.5 491.62,265.3 491.72,266.4 491.82,252.6 491.92,242.7 492.02,239.2 492.12,248.4 492.22,255.4 492.32,266.6 492.42,248.9 492.52,242.3 492.62,245.4 492.72,273.7 492.82,260.3 492.92,263.7 493.02,245.2 493.12,247.7 493.22,263.1 493.32,249.2 493.42,242.7 493.53,254.3 493.63,253.2 493.73,241.2 493.83,237.8 493.93,248.3 494.03,257.0 494.13,251.6 494.23,255.2 494.33,251.5 494.43,248.9 494.53,239.4 494.63,242.7 494.73,259.2 494.83,258.6 494.93,243.3 495.03,238.1 495.13,258.0 495.23,256.6 495.33,258.6 495.43,247.7 495.54,239.3 495.64,241.1 495.74,254.5 495.84,261.9 495.94,245.3 496.04,250.9 496.14,264.0 496.24,240.8 496.34,249.2 496.44,265.6 496.54,245.3 496.64,250.0 496.74,265.0 496.84,262.5 496.94,248.6 497.04,237.8 497.14,241.0 497.24,258.2 497.34,258.5 497.45,267.3 497.55,257.7 497.65,252.8 497.75,254.0 497.85,248.9 497.95,242.0 498.05,242.9 498.15,248.4 498.25,255.6 498.35,249.2 498.45,257.1 498.55,263.3 498.65,259.4 498.75,244.3 498.85,242.4 498.95,242.1 499.05,253.5 499.15,242.7 499.25,263.3 499.35,239.7 499.46,244.0 499.56,255.8 499.66,245.3 499.76,246.6 499.86,249.8 499.96,261.9 500.06,250.9 500.16,247.4 500.26,250.8 500.36,259.7 500.46,278.4 500.56,250.1 500.66,271.7 500.76,249.2 500.86,240.3 500.96,247.4 501.06,255.5 501.16,246.2 501.26,252.3 501.37,245.2 501.47,239.6 501.57,244.7 501.67,261.3 501.77,259.0 501.87,255.1 501.97,244.9 502.07,257.8 502.17,248.3 502.27,251.5 502.37,254.4 502.47,254.3 502.57,246.5 502.67,243.4 502.77,257.5 502.87,245.6 502.97,239.5 503.07,243.2 503.17,244.3 503.27,246.8 503.38,242.3 503.48,244.3 503.58,252.3 503.68,262.2 503.78,263.5 503.88,249.2 503.98,246.7 504.08,246.7 504.18,253.1 504.28,248.5 504.38,244.2 504.48,248.6 504.58,247.2 504.68,249.0 504.78,261.2 504.88,255.9 504.98,253.0 505.08,258.9 505.18,247.2 505.29,240.7 505.39,247.8 505.49,275.5 505.59,266.0 505.69,253.1 505.79,250.6 505.89,246.8 505.99,251.0 506.09,252.2 506.19,263.3 506.29,261.7 506.39,274.8 506.49,269.8 506.59,254.9 506.69,253.6 506.79,253.1 506.89,272.2 506.99,259.4 507.09,275.3 507.19,247.8 507.30,244.4 507.40,244.7 507.50,270.0 507.60,241.1 507.70,239.8 507.80,245.3 507.90,313.8 508.00,248.3 508.10,244.3 508.20,241.9 508.30,258.1 508.40,241.7 508.50,255.7 508.60,249.6 508.70,243.4 508.80,237.6 508.90,241.5 509.00,257.5 509.10,250.1 509.21,245.9 509.31,247.7 509.41,247.5 509.51,258.8 509.61,260.0 509.71,247.1 509.81,249.0 509.91,254.3 510.01,271.4 510.11,260.9 510.21,260.4 510.31,249.6 510.41,250.4 510.51,243.2 510.61,254.4 510.71,241.4 510.81,242.4 510.91,252.2 511.01,257.9 511.11,255.4 511.22,250.8 511.32,252.8 511.42,260.4 511.52,249.0 511.62,257.8 511.72,247.3 511.82,255.1 511.92,248.5 512.02,246.4 512.12,250.3 512.22,243.6 512.32,262.4 512.42,242.4 512.52,245.3 512.62,266.5 512.72,264.8 512.82,232.9 512.92,245.1 513.02,251.5 513.13,273.8 513.23,257.7 513.33,255.1 513.43,257.0 513.53,261.5 513.63,266.5 513.73,250.4 513.83,234.7 513.93,243.9 514.03,256.0 514.13,252.2 514.23,240.0 514.33,238.1 514.43,246.7 514.53,249.1 514.63,266.3 514.73,250.3 514.83,259.9 514.93,269.0 515.03,255.6 515.14,274.0 515.24,259.7 515.34,246.6 515.44,249.0 515.54,277.3 515.64,248.0 515.74,237.1 515.84,246.2 515.94,249.5 516.04,265.3 516.14,249.3 516.24,258.9 516.34,252.9 516.44,259.0 516.54,260.5 516.64,246.5 516.74,241.6 516.84,258.8 516.94,244.5 517.05,249.1 517.15,242.6 517.25,240.4 517.35,247.7 517.45,245.4 517.55,243.9 517.65,244.6 517.75,246.6 517.85,239.6 517.95,247.1 518.05,256.4 518.15,274.3 518.25,248.3 518.35,242.2 518.45,254.7 518.55,247.9 518.65,241.2 518.75,234.9 518.85,242.7 518.95,251.7 519.06,246.4 519.16,254.7 519.26,253.8 519.36,280.7 519.46,273.5 519.56,265.1 519.66,246.6 519.76,245.9 519.86,249.9 519.96,249.3 520.06,246.3 520.16,254.7 520.26,245.0 520.36,237.7 520.46,237.5 520.56,245.0 520.66,269.5 520.76,261.4 520.86,252.8 520.97,245.9 521.07,248.9 521.17,237.7 521.27,234.9 521.37,241.2 521.47,258.4 521.57,245.3 521.67,242.6 521.77,239.8 521.87,243.0 521.97,251.4 522.07,252.0 522.17,252.6 522.27,252.8 522.37,243.9 522.47,242.9 522.57,245.2 522.67,244.8 522.77,262.6 522.87,255.8 522.98,253.7 523.08,248.5 523.18,243.5 523.28,269.6 523.38,247.7 523.48,249.1 523.58,244.0 523.68,240.5 523.78,264.8 523.88,241.1 523.98,237.9 524.08,239.0 524.18,250.4 524.28,263.7 524.38,246.0 524.48,240.9 524.58,274.1 524.68,263.4 524.78,244.1 524.89,233.2 524.99,239.9 525.09,250.9 525.19,266.2 525.29,243.6 525.39,246.2 525.49,273.7 525.59,275.9 525.69,249.8 525.79,246.4 525.89,239.9 525.99,245.0 526.09,244.5 526.19,248.0 526.29,255.9 526.39,243.9 526.49,256.6 526.59,252.5 526.69,242.5 526.79,229.1 526.90,249.2 527.00,246.1 527.10,255.7 527.20,241.1 527.30,236.0 527.40,244.1 527.50,253.4 527.60,248.4 527.70,241.2 527.80,239.2 527.90,247.3 528.00,260.8 528.10,252.2 528.20,246.3 528.30,241.9 528.40,259.6 528.50,242.7 528.60,235.4 528.70,236.4 528.81,239.7 528.91,248.4 529.01,248.4 529.11,243.1 529.21,244.4 529.31,252.5 529.41,252.0 529.51,251.9 529.61,243.9 529.71,249.7 529.81,258.7 529.91,256.4 530.01,249.7 530.11,243.2 530.21,248.1 530.31,267.5 530.41,260.4 530.51,250.2 530.61,249.6 530.71,261.7 530.82,261.3 530.92,259.5 531.02,263.2 531.12,263.1 531.22,245.7 531.32,239.4 531.42,249.2 531.52,259.8 531.62,253.8 531.72,257.3 531.82,244.7 531.92,243.8 532.02,245.4 532.12,253.3 532.22,262.7 532.32,248.6 532.42,238.0 532.52,238.3 532.62,272.8 532.73,240.4 532.83,242.0 532.93,249.0 533.03,278.8 533.13,248.4 533.23,245.0 533.33,240.6 533.43,246.2 533.53,257.1 533.63,259.1 533.73,250.6 533.83,259.0 533.93,266.5 534.03,255.4 534.13,263.2 534.23,219.8 534.33,261.6 534.43,261.6 534.53,245.0 534.63,237.9 534.74,237.4 534.84,238.7 534.94,250.4 535.04,249.5 535.14,244.4 535.24,242.0 535.34,256.9 535.44,267.2 535.54,255.6 535.64,244.8 535.74,240.5 535.84,240.6 535.94,240.3 536.04,255.3 536.14,249.5 536.24,240.4 536.34,240.9 536.44,249.9 536.54,261.1 536.65,263.1 536.75,248.0 536.85,237.7 536.95,247.1 537.05,250.3 537.15,243.7 537.25,249.8 537.35,278.2 537.45,257.6 537.55,248.1 537.65,240.6 537.75,239.8 537.85,243.1 537.95,253.5 538.05,260.4 538.15,251.6 538.25,247.5 538.35,241.3 538.45,243.0 538.55,253.0 538.66,238.6 538.76,232.3 538.86,238.1 538.96,251.8 539.06,259.3 539.16,222.1 539.26,254.6 539.36,257.1 539.46,247.9 539.56,244.8 539.66,257.7 539.76,246.2 539.86,263.8 539.96,263.9 540.06,260.8 540.16,256.8 540.26,256.0 540.36,251.7 540.46,242.3 540.57,253.8 540.67,235.3 540.77,231.2 540.87,240.6 540.97,236.7 541.07,244.7 541.17,251.0 541.27,259.6 541.37,245.0 541.47,243.5 541.57,246.8 541.67,244.5 541.77,243.0 541.87,241.5 541.97,245.4 542.07,243.1 542.17,261.4 542.27,248.3 542.37,250.0 542.47,266.7 542.58,238.5 542.68,245.3 542.78,260.7 542.88,248.7 542.98,249.3 543.08,244.0 543.18,233.5 543.28,243.0 543.38,246.3 543.48,246.9 543.58,251.1 543.68,277.4 543.78,247.9 543.88,238.4 543.98,244.6 544.08,244.5 544.18,223.7 544.28,244.1 544.38,244.4 544.49,255.3 544.59,249.6 544.69,243.3 544.79,248.8 544.89,248.4 544.99,238.2 545.09,262.9 545.19,237.9 545.29,252.5 545.39,252.2 545.49,255.0 545.59,274.8 545.69,255.2 545.79,251.8 545.89,267.8 545.99,244.1 546.09,243.7 546.19,244.0 546.29,245.6 546.39,250.1 546.50,248.9 546.60,245.2 546.70,263.4 546.80,241.0 546.90,254.1 547.00,238.1 547.10,232.6 547.20,237.9 547.30,243.4 547.40,179.8"/><g stroke="#000" stroke-width="1" shape-rendering="crispEdges"><line x1="125.5" y1="169" x2="125.5" y2="322"/><line x1="117" y1="169.5" x2="126" y2="169.5"/><line x1="121" y1="177.5" x2="126" y2="177.5"/><line x1="119" y1="184.5" x2="126" y2="184.5"/><line x1="121" y1="192.5" x2="126" y2="192.5"/><line x1="117" y1="200.5" x2="126" y2="200.5"/><line x1="121" y1="207.5" x2="126" y2="207.5"/><line x1="119" y1="215.5" x2="126" y2="215.5"/><line x1="121" y1="223.5" x2="126" y2="223.5"/><line x1="117" y1="230.5" x2="126" y2="230.5"/><line x1="121" y1="238.5" x2="126" y2="238.5"/><line x1="119" y1="246.5" x2="126" y2="246.5"/><line x1="121" y1="253.5" x2="126" y2="253.5"/><line x1="117" y1="261.5" x2="126" y2="261.5"/><line x1="121" y1="268.5" x2="126" y2="268.5"/><line x1="119" y1="276.5" x2="126" y2="276.5"/><line x1="121" y1="284.5" x2="126" y2="284.5"/><line x1="117" y1="291.5" x2="126" y2="291.5"/><line x1="121" y1="299.5" x2="126" y2="299.5"/><line x1="119" y1="307.5" x2="126" y2="307.5"/><line x1="121" y1="314.5" x2="126" y2="314.5"/><line x1="117" y1="322.5" x2="126" y2="322.5"/><line x1="136" y1="333.5" x2="547" y2="333.5"/><line x1="136.5" y1="333" x2="136.5" y2="342"/><line x1="153.5" y1="333" x2="153.5" y2="338"/><line x1="170.5" y1="333" x2="170.5" y2="338"/><line x1="187.5" y1="333" x2="187.5" y2="338"/><line x1="204.5" y1="333" x2="204.5" y2="338"/><line x1="222.5" y1="333" x2="222.5" y2="342"/><line x1="239.5" y1="333" x2="239.5" y2="338"/><line x1="256.5" y1="333" x2="256.5" y2="338"/><line x1="273.5" y1="333" x2="273.5" y2="338"/><line x1="290.5" y1="333" x2="290.5" y2="338"/><line x1="307.5" y1="333" x2="307.5" y2="342"/><line x1="324.5" y1="333" x2="324.5" y2="338"/><line x1="342.5" y1="333" x2="342.5" y2="338"/><line x1="359.5" y1="333" x2="359.5" y2="338"/><line x1="376.5" y1="333" x2="376.5" y2="338"/><line x1="393.5" y1="333" x2="393.5" y2="342"/><line x1="410.5" y1="333" x2="410.5" y2="338"/><line x1="427.5" y1="333" x2="427.5" y2="338"/><line x1="444.5" y1="333" x2="444.5" y2="338"/><line x1="462.5" y1="333" x2="462.5" y2="338"/><line x1="479.5" y1="333" x2="479.5" y2="342"/><line x1="496.5" y1="333" x2="496.5" y2="338"/><line x1="513.5" y1="333" x2="513.5" y2="338"/><line x1="530.5" y1="333" x2="530.5" y2="338"/><line x1="547.5" y1="333" x2="547.5" y2="338"/></g></svg>
<div class="t" style="right:588.5px;top:163px;">0</div>
<div class="t" style="right:588.5px;top:194px;">-20</div>
<div class="t" style="right:588.5px;top:224px;">-40</div>
<div class="t" style="right:588.5px;top:255px;">-60</div>
<div class="t" style="right:588.5px;top:285px;">-80</div>
<div class="t" style="right:588.5px;top:316px;">-100</div>
<div class="t" style="left:116.30000000000001px;width:40px;text-align:center;top:344px;">0</div>
<div class="t" style="left:202.05px;width:40px;text-align:center;top:344px;">5</div>
<div class="t" style="left:287.8px;width:40px;text-align:center;top:344px;">10</div>
<div class="t" style="left:373.55px;width:40px;text-align:center;top:344px;">15</div>
<div class="t" style="left:459.3px;width:40px;text-align:center;top:344px;">20</div>
<div class="t" style="left:302px;top:360px;letter-spacing:-0.029px;">Frequency [kHz]</div>
<div class="t" style="left:82px;top:244px;transform:translate(-50%,-50%) rotate(-90deg);letter-spacing:0px">Input Spectrum [dB]</div>
<div class="b" style="left:563px;top:148px;width:116px;height:24px;background:#FFFFFF"></div>
<div class="b" style="left:563px;top:148px;width:115px;height:23px;background:#716F64"></div>
<div class="b" style="left:564px;top:149px;width:114px;height:22px;background:#F1EFE2"></div>
<div class="b" style="left:564px;top:149px;width:113px;height:21px;background:#ACA899"></div>
<div class="b" style="left:565px;top:150px;width:112px;height:20px;background:#F5F4EE"></div>
<div class="t" style="left:564.0px;width:116px;text-align:center;top:155.5px;letter-spacing:-0.077px;">Input Spectrum</div>
<div class="b" style="left:563px;top:180px;width:116px;height:24px;background:#716F64"></div>
<div class="b" style="left:563px;top:180px;width:115px;height:23px;background:#FFFFFF"></div>
<div class="b" style="left:564px;top:181px;width:114px;height:22px;background:#ACA899"></div>
<div class="b" style="left:564px;top:181px;width:113px;height:21px;background:#F1EFE2"></div>
<div class="b" style="left:565px;top:182px;width:112px;height:20px;background:#ECE9D8"></div>
<div class="t" style="left:563.0px;width:116px;text-align:center;top:186.5px;">Shifted PSD</div>
<div class="b" style="left:563px;top:212px;width:116px;height:24px;background:#716F64"></div>
<div class="b" style="left:563px;top:212px;width:115px;height:23px;background:#FFFFFF"></div>
<div class="b" style="left:564px;top:213px;width:114px;height:22px;background:#ACA899"></div>
<div class="b" style="left:564px;top:213px;width:113px;height:21px;background:#F1EFE2"></div>
<div class="b" style="left:565px;top:214px;width:112px;height:20px;background:#ECE9D8"></div>
<div class="t" style="left:563.0px;width:116px;text-align:center;top:218.5px;">Transfer Function</div>
<div class="b" style="left:563px;top:244px;width:116px;height:24px;background:#716F64"></div>
<div class="b" style="left:563px;top:244px;width:115px;height:23px;background:#FFFFFF"></div>
<div class="b" style="left:564px;top:245px;width:114px;height:22px;background:#ACA899"></div>
<div class="b" style="left:564px;top:245px;width:113px;height:21px;background:#F1EFE2"></div>
<div class="b" style="left:565px;top:246px;width:112px;height:20px;background:#ECE9D8"></div>
<div class="t" style="left:563.0px;width:116px;text-align:center;top:250.5px;letter-spacing:-0.227px;">Impulse Response</div>
<div class="b" style="left:563px;top:276px;width:116px;height:24px;background:#716F64"></div>
<div class="b" style="left:563px;top:276px;width:115px;height:23px;background:#FFFFFF"></div>
<div class="b" style="left:564px;top:277px;width:114px;height:22px;background:#ACA899"></div>
<div class="b" style="left:564px;top:277px;width:113px;height:21px;background:#F1EFE2"></div>
<div class="b" style="left:565px;top:278px;width:112px;height:20px;background:#ECE9D8"></div>
<div class="t" style="left:563.0px;width:116px;text-align:center;top:282.5px;letter-spacing:0.000px;">FAC</div>
<div class="b" style="left:563px;top:308px;width:116px;height:24px;background:#716F64"></div>
<div class="b" style="left:563px;top:308px;width:115px;height:23px;background:#FFFFFF"></div>
<div class="b" style="left:564px;top:309px;width:114px;height:22px;background:#ACA899"></div>
<div class="b" style="left:564px;top:309px;width:113px;height:21px;background:#F1EFE2"></div>
<div class="b" style="left:565px;top:310px;width:112px;height:20px;background:#ECE9D8"></div>
<div class="t" style="left:563.0px;width:116px;text-align:center;top:314.5px;letter-spacing:0.200px;">SDC</div>
<div class="b" style="left:563px;top:340px;width:116px;height:24px;background:#716F64"></div>
<div class="b" style="left:563px;top:340px;width:115px;height:23px;background:#FFFFFF"></div>
<div class="b" style="left:564px;top:341px;width:114px;height:22px;background:#ACA899"></div>
<div class="b" style="left:564px;top:341px;width:113px;height:21px;background:#F1EFE2"></div>
<div class="b" style="left:565px;top:342px;width:112px;height:20px;background:#ECE9D8"></div>
<div class="t" style="left:563.0px;width:116px;text-align:center;top:346.5px;">MSC</div>
<div class="b" style="left:9px;top:400px;width:226px;height:40px;border:1px solid #FFFFFF"></div>
<div class="b" style="left:8px;top:399px;width:226px;height:40px;border:1px solid #ACA899"></div>
<div class="b" style="left:16px;top:393px;width:213px;height:12px;background:#ECE9D8"></div>
<div class="t" style="left:19px;top:394px;letter-spacing:-0.229px;">Channel Estimation: Frequency Interpolation</div>
<svg class="b" style="left:17px;top:412px" width="12" height="12" shape-rendering="crispEdges"><path d="M4 2h4v1h1v1h1v4h-1v1h-1v1h-4v-1h-1v-1h-1v-4h1v-1h1z" fill="#FFFFFF"/><path d="M0 4h1v1h-1zM0 5h1v1h-1zM0 6h1v1h-1zM0 7h1v1h-1zM1 2h1v1h-1zM1 3h1v1h-1zM1 8h1v1h-1zM1 9h1v1h-1zM2 1h1v1h-1zM3 1h1v1h-1zM4 0h1v1h-1zM5 0h1v1h-1zM6 0h1v1h-1zM7 0h1v1h-1zM8 1h1v1h-1zM9 1h1v1h-1z" fill="#ACA899"/><path d="M1 4h1v1h-1zM1 5h1v1h-1zM1 6h1v1h-1zM1 7h1v1h-1zM2 2h1v1h-1zM2 3h1v1h-1zM2 8h1v1h-1zM3 2h1v1h-1zM4 1h1v1h-1zM5 1h1v1h-1zM6 1h1v1h-1zM7 1h1v1h-1zM8 2h1v1h-1zM9 2h1v1h-1z" fill="#716F64"/><path d="M2 9h1v1h-1zM3 9h1v1h-1zM4 10h1v1h-1zM5 10h1v1h-1zM6 10h1v1h-1zM7 10h1v1h-1zM8 9h1v1h-1zM9 3h1v1h-1zM9 8h1v1h-1zM9 9h1v1h-1zM10 4h1v1h-1zM10 5h1v1h-1zM10 6h1v1h-1zM10 7h1v1h-1z" fill="#F1EFE2"/><path d="M2 10h1v1h-1zM3 10h1v1h-1zM4 11h1v1h-1zM5 11h1v1h-1zM6 11h1v1h-1zM7 11h1v1h-1zM8 10h1v1h-1zM9 10h1v1h-1zM10 2h1v1h-1zM10 3h1v1h-1zM10 8h1v1h-1zM10 9h1v1h-1zM11 4h1v1h-1zM11 5h1v1h-1zM11 6h1v1h-1zM11 7h1v1h-1z" fill="#FFFFFF"/><path d="M5 4h2v1h1v2h-1v1h-2v-1h-1v-2h1z" fill="#000"/></svg>
<div class="t" style="left:36px;top:413px;letter-spacing:-0.360px;">Wiener</div>
<svg class="b" style="left:77px;top:412px" width="12" height="12" shape-rendering="crispEdges"><path d="M4 2h4v1h1v1h1v4h-1v1h-1v1h-4v-1h-1v-1h-1v-4h1v-1h1z" fill="#FFFFFF"/><path d="M0 4h1v1h-1zM0 5h1v1h-1zM0 6h1v1h-1zM0 7h1v1h-1zM1 2h1v1h-1zM1 3h1v1h-1zM1 8h1v1h-1zM1 9h1v1h-1zM2 1h1v1h-1zM3 1h1v1h-1zM4 0h1v1h-1zM5 0h1v1h-1zM6 0h1v1h-1zM7 0h1v1h-1zM8 1h1v1h-1zM9 1h1v1h-1z" fill="#ACA899"/><path d="M1 4h1v1h-1zM1 5h1v1h-1zM1 6h1v1h-1zM1 7h1v1h-1zM2 2h1v1h-1zM2 3h1v1h-1zM2 8h1v1h-1zM3 2h1v1h-1zM4 1h1v1h-1zM5 1h1v1h-1zM6 1h1v1h-1zM7 1h1v1h-1zM8 2h1v1h-1zM9 2h1v1h-1z" fill="#716F64"/><path d="M2 9h1v1h-1zM3 9h1v1h-1zM4 10h1v1h-1zM5 10h1v1h-1zM6 10h1v1h-1zM7 10h1v1h-1zM8 9h1v1h-1zM9 3h1v1h-1zM9 8h1v1h-1zM9 9h1v1h-1zM10 4h1v1h-1zM10 5h1v1h-1zM10 6h1v1h-1zM10 7h1v1h-1z" fill="#F1EFE2"/><path d="M2 10h1v1h-1zM3 10h1v1h-1zM4 11h1v1h-1zM5 11h1v1h-1zM6 11h1v1h-1zM7 11h1v1h-1zM8 10h1v1h-1zM9 10h1v1h-1zM10 2h1v1h-1zM10 3h1v1h-1zM10 8h1v1h-1zM10 9h1v1h-1zM11 4h1v1h-1zM11 5h1v1h-1zM11 6h1v1h-1zM11 7h1v1h-1z" fill="#FFFFFF"/></svg>
<div class="t" style="left:96px;top:413px;letter-spacing:-0.280px;">Linear</div>
<svg class="b" style="left:135px;top:412px" width="12" height="12" shape-rendering="crispEdges"><path d="M4 2h4v1h1v1h1v4h-1v1h-1v1h-4v-1h-1v-1h-1v-4h1v-1h1z" fill="#FFFFFF"/><path d="M0 4h1v1h-1zM0 5h1v1h-1zM0 6h1v1h-1zM0 7h1v1h-1zM1 2h1v1h-1zM1 3h1v1h-1zM1 8h1v1h-1zM1 9h1v1h-1zM2 1h1v1h-1zM3 1h1v1h-1zM4 0h1v1h-1zM5 0h1v1h-1zM6 0h1v1h-1zM7 0h1v1h-1zM8 1h1v1h-1zM9 1h1v1h-1z" fill="#ACA899"/><path d="M1 4h1v1h-1zM1 5h1v1h-1zM1 6h1v1h-1zM1 7h1v1h-1zM2 2h1v1h-1zM2 3h1v1h-1zM2 8h1v1h-1zM3 2h1v1h-1zM4 1h1v1h-1zM5 1h1v1h-1zM6 1h1v1h-1zM7 1h1v1h-1zM8 2h1v1h-1zM9 2h1v1h-1z" fill="#716F64"/><path d="M2 9h1v1h-1zM3 9h1v1h-1zM4 10h1v1h-1zM5 10h1v1h-1zM6 10h1v1h-1zM7 10h1v1h-1zM8 9h1v1h-1zM9 3h1v1h-1zM9 8h1v1h-1zM9 9h1v1h-1zM10 4h1v1h-1zM10 5h1v1h-1zM10 6h1v1h-1zM10 7h1v1h-1z" fill="#F1EFE2"/><path d="M2 10h1v1h-1zM3 10h1v1h-1zM4 11h1v1h-1zM5 11h1v1h-1zM6 11h1v1h-1zM7 11h1v1h-1zM8 10h1v1h-1zM9 10h1v1h-1zM10 2h1v1h-1zM10 3h1v1h-1zM10 8h1v1h-1zM10 9h1v1h-1zM11 4h1v1h-1zM11 5h1v1h-1zM11 6h1v1h-1zM11 7h1v1h-1z" fill="#FFFFFF"/></svg>
<div class="t" style="left:155px;top:413px;letter-spacing:-0.167px;">DFT Zero Pad.</div>
<div class="b" style="left:9px;top:451px;width:226px;height:41px;border:1px solid #FFFFFF"></div>
<div class="b" style="left:8px;top:450px;width:226px;height:41px;border:1px solid #ACA899"></div>
<div class="b" style="left:16px;top:444px;width:187px;height:12px;background:#ECE9D8"></div>
<div class="t" style="left:19px;top:445px;letter-spacing:-0.205px;">Channel Estimation: Time Interpolation</div>
<svg class="b" style="left:17px;top:463px" width="12" height="12" shape-rendering="crispEdges"><path d="M4 2h4v1h1v1h1v4h-1v1h-1v1h-4v-1h-1v-1h-1v-4h1v-1h1z" fill="#FFFFFF"/><path d="M0 4h1v1h-1zM0 5h1v1h-1zM0 6h1v1h-1zM0 7h1v1h-1zM1 2h1v1h-1zM1 3h1v1h-1zM1 8h1v1h-1zM1 9h1v1h-1zM2 1h1v1h-1zM3 1h1v1h-1zM4 0h1v1h-1zM5 0h1v1h-1zM6 0h1v1h-1zM7 0h1v1h-1zM8 1h1v1h-1zM9 1h1v1h-1z" fill="#ACA899"/><path d="M1 4h1v1h-1zM1 5h1v1h-1zM1 6h1v1h-1zM1 7h1v1h-1zM2 2h1v1h-1zM2 3h1v1h-1zM2 8h1v1h-1zM3 2h1v1h-1zM4 1h1v1h-1zM5 1h1v1h-1zM6 1h1v1h-1zM7 1h1v1h-1zM8 2h1v1h-1zM9 2h1v1h-1z" fill="#716F64"/><path d="M2 9h1v1h-1zM3 9h1v1h-1zM4 10h1v1h-1zM5 10h1v1h-1zM6 10h1v1h-1zM7 10h1v1h-1zM8 9h1v1h-1zM9 3h1v1h-1zM9 8h1v1h-1zM9 9h1v1h-1zM10 4h1v1h-1zM10 5h1v1h-1zM10 6h1v1h-1zM10 7h1v1h-1z" fill="#F1EFE2"/><path d="M2 10h1v1h-1zM3 10h1v1h-1zM4 11h1v1h-1zM5 11h1v1h-1zM6 11h1v1h-1zM7 11h1v1h-1zM8 10h1v1h-1zM9 10h1v1h-1zM10 2h1v1h-1zM10 3h1v1h-1zM10 8h1v1h-1zM10 9h1v1h-1zM11 4h1v1h-1zM11 5h1v1h-1zM11 6h1v1h-1zM11 7h1v1h-1z" fill="#FFFFFF"/><path d="M5 4h2v1h1v2h-1v1h-2v-1h-1v-2h1z" fill="#000"/></svg>
<div class="t" style="left:36px;top:464px;letter-spacing:-0.360px;">Wiener</div>
<svg class="b" style="left:125px;top:463px" width="12" height="12" shape-rendering="crispEdges"><path d="M4 2h4v1h1v1h1v4h-1v1h-1v1h-4v-1h-1v-1h-1v-4h1v-1h1z" fill="#FFFFFF"/><path d="M0 4h1v1h-1zM0 5h1v1h-1zM0 6h1v1h-1zM0 7h1v1h-1zM1 2h1v1h-1zM1 3h1v1h-1zM1 8h1v1h-1zM1 9h1v1h-1zM2 1h1v1h-1zM3 1h1v1h-1zM4 0h1v1h-1zM5 0h1v1h-1zM6 0h1v1h-1zM7 0h1v1h-1zM8 1h1v1h-1zM9 1h1v1h-1z" fill="#ACA899"/><path d="M1 4h1v1h-1zM1 5h1v1h-1zM1 6h1v1h-1zM1 7h1v1h-1zM2 2h1v1h-1zM2 3h1v1h-1zM2 8h1v1h-1zM3 2h1v1h-1zM4 1h1v1h-1zM5 1h1v1h-1zM6 1h1v1h-1zM7 1h1v1h-1zM8 2h1v1h-1zM9 2h1v1h-1z" fill="#716F64"/><path d="M2 9h1v1h-1zM3 9h1v1h-1zM4 10h1v1h-1zM5 10h1v1h-1zM6 10h1v1h-1zM7 10h1v1h-1zM8 9h1v1h-1zM9 3h1v1h-1zM9 8h1v1h-1zM9 9h1v1h-1zM10 4h1v1h-1zM10 5h1v1h-1zM10 6h1v1h-1zM10 7h1v1h-1z" fill="#F1EFE2"/><path d="M2 10h1v1h-1zM3 10h1v1h-1zM4 11h1v1h-1zM5 11h1v1h-1zM6 11h1v1h-1zM7 11h1v1h-1zM8 10h1v1h-1zM9 10h1v1h-1zM10 2h1v1h-1zM10 3h1v1h-1zM10 8h1v1h-1zM10 9h1v1h-1zM11 4h1v1h-1zM11 5h1v1h-1zM11 6h1v1h-1zM11 7h1v1h-1z" fill="#FFFFFF"/></svg>
<div class="t" style="left:144px;top:464px;letter-spacing:-0.280px;">Linear</div>
<div class="b" style="left:9px;top:503px;width:226px;height:40px;border:1px solid #FFFFFF"></div>
<div class="b" style="left:8px;top:502px;width:226px;height:40px;border:1px solid #ACA899"></div>
<div class="b" style="left:16px;top:496px;width:102px;height:12px;background:#ECE9D8"></div>
<div class="t" style="left:19px;top:497px;letter-spacing:-0.118px;">Time Sync Tracking</div>
<svg class="b" style="left:17px;top:515px" width="12" height="12" shape-rendering="crispEdges"><path d="M4 2h4v1h1v1h1v4h-1v1h-1v1h-4v-1h-1v-1h-1v-4h1v-1h1z" fill="#FFFFFF"/><path d="M0 4h1v1h-1zM0 5h1v1h-1zM0 6h1v1h-1zM0 7h1v1h-1zM1 2h1v1h-1zM1 3h1v1h-1zM1 8h1v1h-1zM1 9h1v1h-1zM2 1h1v1h-1zM3 1h1v1h-1zM4 0h1v1h-1zM5 0h1v1h-1zM6 0h1v1h-1zM7 0h1v1h-1zM8 1h1v1h-1zM9 1h1v1h-1z" fill="#ACA899"/><path d="M1 4h1v1h-1zM1 5h1v1h-1zM1 6h1v1h-1zM1 7h1v1h-1zM2 2h1v1h-1zM2 3h1v1h-1zM2 8h1v1h-1zM3 2h1v1h-1zM4 1h1v1h-1zM5 1h1v1h-1zM6 1h1v1h-1zM7 1h1v1h-1zM8 2h1v1h-1zM9 2h1v1h-1z" fill="#716F64"/><path d="M2 9h1v1h-1zM3 9h1v1h-1zM4 10h1v1h-1zM5 10h1v1h-1zM6 10h1v1h-1zM7 10h1v1h-1zM8 9h1v1h-1zM9 3h1v1h-1zM9 8h1v1h-1zM9 9h1v1h-1zM10 4h1v1h-1zM10 5h1v1h-1zM10 6h1v1h-1zM10 7h1v1h-1z" fill="#F1EFE2"/><path d="M2 10h1v1h-1zM3 10h1v1h-1zM4 11h1v1h-1zM5 11h1v1h-1zM6 11h1v1h-1zM7 11h1v1h-1zM8 10h1v1h-1zM9 10h1v1h-1zM10 2h1v1h-1zM10 3h1v1h-1zM10 8h1v1h-1zM10 9h1v1h-1zM11 4h1v1h-1zM11 5h1v1h-1zM11 6h1v1h-1zM11 7h1v1h-1z" fill="#FFFFFF"/><path d="M5 4h2v1h1v2h-1v1h-2v-1h-1v-2h1z" fill="#000"/></svg>
<div class="t" style="left:37px;top:516px;letter-spacing:-0.455px;">Guard Energy</div>
<svg class="b" style="left:125px;top:515px" width="12" height="12" shape-rendering="crispEdges"><path d="M4 2h4v1h1v1h1v4h-1v1h-1v1h-4v-1h-1v-1h-1v-4h1v-1h1z" fill="#FFFFFF"/><path d="M0 4h1v1h-1zM0 5h1v1h-1zM0 6h1v1h-1zM0 7h1v1h-1zM1 2h1v1h-1zM1 3h1v1h-1zM1 8h1v1h-1zM1 9h1v1h-1zM2 1h1v1h-1zM3 1h1v1h-1zM4 0h1v1h-1zM5 0h1v1h-1zM6 0h1v1h-1zM7 0h1v1h-1zM8 1h1v1h-1zM9 1h1v1h-1z" fill="#ACA899"/><path d="M1 4h1v1h-1zM1 5h1v1h-1zM1 6h1v1h-1zM1 7h1v1h-1zM2 2h1v1h-1zM2 3h1v1h-1zM2 8h1v1h-1zM3 2h1v1h-1zM4 1h1v1h-1zM5 1h1v1h-1zM6 1h1v1h-1zM7 1h1v1h-1zM8 2h1v1h-1zM9 2h1v1h-1z" fill="#716F64"/><path d="M2 9h1v1h-1zM3 9h1v1h-1zM4 10h1v1h-1zM5 10h1v1h-1zM6 10h1v1h-1zM7 10h1v1h-1zM8 9h1v1h-1zM9 3h1v1h-1zM9 8h1v1h-1zM9 9h1v1h-1zM10 4h1v1h-1zM10 5h1v1h-1zM10 6h1v1h-1zM10 7h1v1h-1z" fill="#F1EFE2"/><path d="M2 10h1v1h-1zM3 10h1v1h-1zM4 11h1v1h-1zM5 11h1v1h-1zM6 11h1v1h-1zM7 11h1v1h-1zM8 10h1v1h-1zM9 10h1v1h-1zM10 2h1v1h-1zM10 3h1v1h-1zM10 8h1v1h-1zM10 9h1v1h-1zM11 4h1v1h-1zM11 5h1v1h-1zM11 6h1v1h-1zM11 7h1v1h-1z" fill="#FFFFFF"/></svg>
<div class="t" style="left:144px;top:516px;letter-spacing:-0.156px;">First Peak</div>
<div class="b" style="left:242px;top:400px;width:364px;height:64px;border:1px solid #FFFFFF"></div>
<div class="b" style="left:241px;top:399px;width:364px;height:64px;border:1px solid #ACA899"></div>
<div class="b" style="left:249px;top:393px;width:70px;height:12px;background:#ECE9D8"></div>
<div class="t" style="left:252px;top:394px;letter-spacing:-0.133px;">Misc Settings</div>
<div class="b" style="left:250px;top:413px;width:13px;height:13px;background:#FFFFFF"></div>
<div class="b" style="left:250px;top:413px;width:12px;height:12px;background:#ACA899"></div>
<div class="b" style="left:251px;top:414px;width:11px;height:11px;background:#F1EFE2"></div>
<div class="b" style="left:251px;top:414px;width:10px;height:10px;background:#716F64"></div>
<div class="b" style="left:252px;top:415px;width:9px;height:9px;background:#FFFFFF"></div>
<svg class="b" style="left:250px;top:413px" width="13" height="13" shape-rendering="crispEdges"><path d="M3 5h1v3h-1zM4 6h1v3h-1zM5 7h1v3h-1zM6 6h1v3h-1zM7 5h1v3h-1zM8 4h1v3h-1zM9 3h1v3h-1z" fill="#000"/></svg>
<div class="t" style="left:270px;top:414px;letter-spacing:-0.222px;">Flip Input Spectrum</div>
<div class="b" style="left:250px;top:437px;width:13px;height:13px;background:#FFFFFF"></div>
<div class="b" style="left:250px;top:437px;width:12px;height:12px;background:#ACA899"></div>
<div class="b" style="left:251px;top:438px;width:11px;height:11px;background:#F1EFE2"></div>
<div class="b" style="left:251px;top:438px;width:10px;height:10px;background:#716F64"></div>
<div class="b" style="left:252px;top:439px;width:9px;height:9px;background:#FFFFFF"></div>
<div class="t" style="left:270px;top:438px;letter-spacing:-0.111px;">Mute Audio</div>
<div class="t" style="left:429px;top:412px;letter-spacing:-0.259px;">MLC: Number of Iterations: 1</div>
<svg class="b" style="left:0;top:0" width="700" height="548" shape-rendering="crispEdges"><line x1="400.5" y1="429" x2="400.5" y2="433" stroke="#000"/><line x1="400.5" y1="451" x2="400.5" y2="455" stroke="#000"/><line x1="448.5" y1="429" x2="448.5" y2="433" stroke="#000"/><line x1="448.5" y1="451" x2="448.5" y2="455" stroke="#000"/><line x1="496.5" y1="429" x2="496.5" y2="433" stroke="#000"/><line x1="496.5" y1="451" x2="496.5" y2="455" stroke="#000"/><line x1="544.5" y1="429" x2="544.5" y2="433" stroke="#000"/><line x1="544.5" y1="451" x2="544.5" y2="455" stroke="#000"/><line x1="592.5" y1="429" x2="592.5" y2="433" stroke="#000"/><line x1="592.5" y1="451" x2="592.5" y2="455" stroke="#000"/><rect x="394" y="440" width="203" height="4" fill="#FFFFFF"/><rect x="394" y="440" width="202" height="3" fill="#ACA899"/><rect x="395" y="441" width="201" height="2" fill="#716F64"/><rect x="395" y="442" width="201" height="1" fill="#F1EFE2"/><rect x="442" y="434" width="11" height="16" fill="#716F64"/><rect x="442" y="434" width="10" height="15" fill="#FFFFFF"/><rect x="443" y="435" width="9" height="14" fill="#ACA899"/><rect x="443" y="435" width="8" height="13" fill="#F1EFE2"/><rect x="444" y="436" width="7" height="12" fill="#F3F1E8"/></svg>
<div class="b" style="left:242px;top:477px;width:364px;height:66px;border:1px solid #FFFFFF"></div>
<div class="b" style="left:241px;top:476px;width:364px;height:66px;border:1px solid #ACA899"></div>
<div class="b" style="left:249px;top:470px;width:100px;height:12px;background:#ECE9D8"></div>
<div class="t" style="left:252px;top:471px;letter-spacing:-0.144px;">Log File, Save Data</div>
<div class="b" style="left:252px;top:491px;width:13px;height:13px;background:#FFFFFF"></div>
<div class="b" style="left:252px;top:491px;width:12px;height:12px;background:#ACA899"></div>
<div class="b" style="left:253px;top:492px;width:11px;height:11px;background:#F1EFE2"></div>
<div class="b" style="left:253px;top:492px;width:10px;height:10px;background:#716F64"></div>
<div class="b" style="left:254px;top:493px;width:9px;height:9px;background:#FFFFFF"></div>
<div class="t" style="left:272px;top:492px;letter-spacing:-0.229px;">Log File, Freq:</div>
<div class="b" style="left:252px;top:517px;width:13px;height:13px;background:#FFFFFF"></div>
<div class="b" style="left:252px;top:517px;width:12px;height:12px;background:#ACA899"></div>
<div class="b" style="left:253px;top:518px;width:11px;height:11px;background:#F1EFE2"></div>
<div class="b" style="left:253px;top:518px;width:10px;height:10px;background:#716F64"></div>
<div class="b" style="left:254px;top:519px;width:9px;height:9px;background:#FFFFFF"></div>
<div class="t" style="left:272px;top:517px;letter-spacing:0.025px;">Save Audio as WAV</div>
<div class="b" style="left:342px;top:488px;width:230px;height:20px;background:#FFFFFF"></div>
<div class="b" style="left:342px;top:488px;width:229px;height:19px;background:#ACA899"></div>
<div class="b" style="left:343px;top:489px;width:228px;height:18px;background:#F1EFE2"></div>
<div class="b" style="left:343px;top:489px;width:227px;height:17px;background:#716F64"></div>
<div class="b" style="left:344px;top:490px;width:226px;height:16px;background:#FFFFFF"></div>
<div class="t" style="left:575px;top:493px;letter-spacing:0.300px;">kHz</div>
<div class="b" style="left:612px;top:515px;width:80px;height:26px;background:#64625A"></div>
<div class="b" style="left:613px;top:516px;width:78px;height:24px;background:#716F64"></div>
<div class="b" style="left:613px;top:516px;width:77px;height:23px;background:#FFFFFF"></div>
<div class="b" style="left:614px;top:517px;width:76px;height:22px;background:#ACA899"></div>
<div class="b" style="left:614px;top:517px;width:75px;height:21px;background:#F1EFE2"></div>
<div class="b" style="left:615px;top:518px;width:74px;height:20px;background:#ECE9D8"></div>
<div class="t" style="left:612.5px;width:80px;text-align:center;top:522px;letter-spacing:-0.375px;"><u>C</u>lose</div>
<svg class="b" style="left:688px;top:536px" width="12" height="12" shape-rendering="crispEdges"><line x1="9" y1="12" x2="12" y2="9" stroke="#FFFFFF"/><line x1="10" y1="12" x2="12" y2="10" stroke="#ACA899"/></svg>
</body></html>
